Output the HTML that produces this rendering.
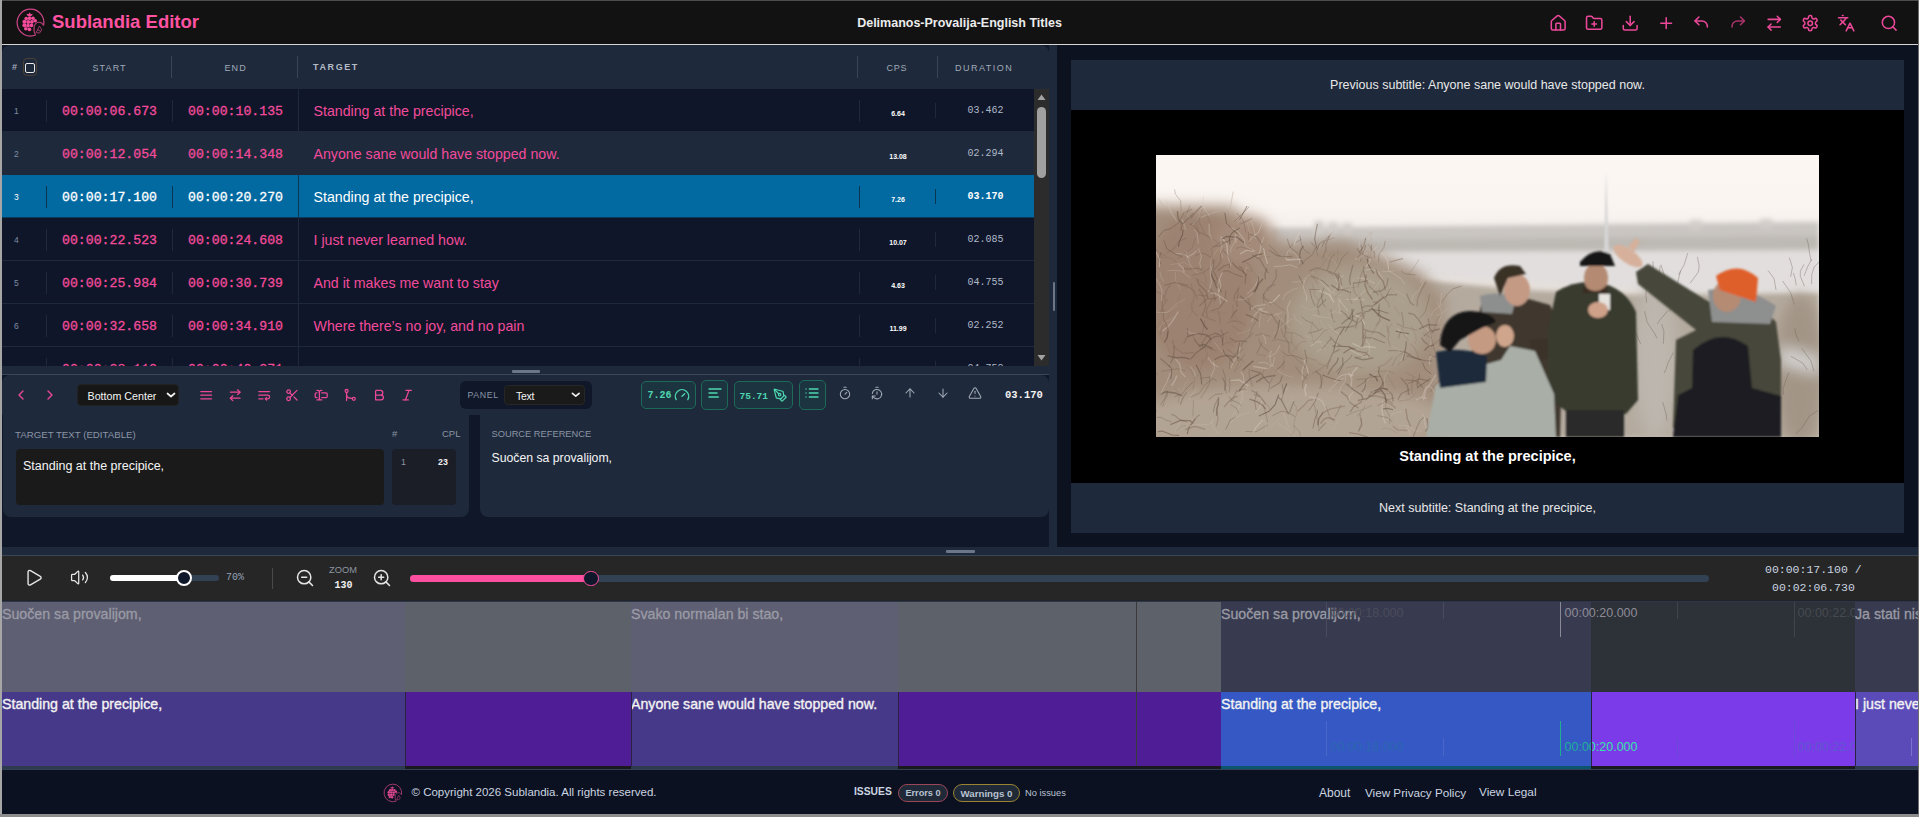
<!DOCTYPE html>
<html><head><meta charset="utf-8">
<style>
*{box-sizing:border-box;margin:0;padding:0}
html,body{width:1919px;height:817px;overflow:hidden;background:#8f8f8f;font-family:"Liberation Sans",sans-serif;}
.a{position:absolute}
.mono{font-family:"Liberation Mono",monospace}
svg.i{position:absolute;fill:none;stroke-linecap:round;stroke-linejoin:round}
.nw{white-space:nowrap}
</style></head>
<body>
<div class="a" style="left:0px;top:0px;width:1919px;height:1px;background:#4c4c4c;"></div>
<div class="a" style="left:0px;top:0px;width:2px;height:817px;background:#a6a6a6;"></div>
<div class="a" style="left:1918px;top:0px;width:1px;height:817px;background:#6e6e6e;"></div>
<div class="a" style="left:2px;top:1px;width:1916px;height:43px;background:#121212;"></div>
<div class="a" style="left:2px;top:44px;width:1916px;height:1px;background:#d6d6d6;"></div>
<svg class="a" style="left:14px;top:6px" width="34" height="34" viewBox="14 6 34 34">
 <path d="M35.6 35 A13.4 13.4 0 1 1 43.6 25.4" stroke="#cf468a" stroke-width="1.2" fill="none"/>
 <path d="M43.6 25.4 C41.5 20.8 35.5 21.2 34.2 26.6 C33.6 29.8 34.3 33 35.6 35" stroke="#b73e7a" stroke-width="1.1" fill="none"/>
 <g fill="#f44b9b">
  <path d="M29.6 12.6 l1.2 1.7 1.8-.5 -.5 1.8 -2.5.6 -2.5-.6 -.5-1.8 1.8.5z"/>
  <circle cx="29.6" cy="18.2" r="1.9"/><circle cx="33" cy="18.3" r="1.8"/><circle cx="26.2" cy="18.6" r="1.8"/>
  <circle cx="24.4" cy="21.7" r="2"/><circle cx="28.2" cy="22" r="2"/><circle cx="31.9" cy="21.8" r="1.9"/><circle cx="35.2" cy="20.7" r="1.8"/>
  <circle cx="24.4" cy="25.3" r="2"/><circle cx="28" cy="25.6" r="1.9"/><circle cx="31.5" cy="25.4" r="1.8"/>
  <circle cx="25.8" cy="28.7" r="1.8"/><circle cx="29.4" cy="29.3" r="1.9"/>
 </g>
 <path d="M36.2 32.5 l3.2-6.3 2.4 3.6 -2.3 3.3z M37.6 29.6 l3.2 1.8" stroke="#9e3a6c" stroke-width="1" fill="none"/>
</svg>
<div class="a nw" style="left:52px;top:13.28px;font-size:18.5px;line-height:18.5px;color:#ff52a2;font-weight:bold;">Sublandia Editor</div>
<div class="a nw" style="left:0px;top:17.38px;font-size:12.5px;line-height:12.5px;color:#ececec;font-weight:bold;width:1919px;text-align:center;">Delimanos-Provalija-English Titles</div>
<svg class="i" style="left:1548.8px;top:14px" width="18.4" height="18.4" viewBox="0 0 24 24" stroke="#ec4899" stroke-width="2"><path d="M15 21v-8a1 1 0 0 0-1-1h-4a1 1 0 0 0-1 1v8"/><path d="M3 10a2 2 0 0 1 .709-1.528l7-5.999a2 2 0 0 1 2.582 0l7 5.999A2 2 0 0 1 21 10v9a2 2 0 0 1-2 2H5a2 2 0 0 1-2-2z"/></svg>
<svg class="i" style="left:1584.8px;top:14px" width="18.4" height="18.4" viewBox="0 0 24 24" stroke="#ec4899" stroke-width="2"><path d="M12 10v6"/><path d="M9 13h6"/><path d="M20 20a2 2 0 0 0 2-2V8a2 2 0 0 0-2-2h-7.9a2 2 0 0 1-1.69-.9L9.6 3.9A2 2 0 0 0 7.93 3H4a2 2 0 0 0-2 2v13a2 2 0 0 0 2 2Z"/></svg>
<svg class="i" style="left:1620.8px;top:14px" width="18.4" height="18.4" viewBox="0 0 24 24" stroke="#ec4899" stroke-width="2"><path d="M21 15v4a2 2 0 0 1-2 2H5a2 2 0 0 1-2-2v-4"/><polyline points="7 10 12 15 17 10"/><line x1="12" x2="12" y1="15" y2="3"/></svg>
<svg class="i" style="left:1656.8px;top:14px" width="18.4" height="18.4" viewBox="0 0 24 24" stroke="#ec4899" stroke-width="2"><path d="M5 12h14"/><path d="M12 5v14"/></svg>
<svg class="i" style="left:1691.8px;top:14px" width="18.4" height="18.4" viewBox="0 0 24 24" stroke="#ec4899" stroke-width="2"><path d="M9 14 4 9l5-5"/><path d="M4 9h9a7 7 0 0 1 7 7v1"/></svg>
<svg class="i" style="left:1728.8px;top:14px" width="18.4" height="18.4" viewBox="0 0 24 24" stroke="#a8336c" stroke-width="2"><path d="m15 14 5-5-5-5"/><path d="M20 9h-9a7 7 0 0 0-7 7v1"/></svg>
<svg class="i" style="left:1764.8px;top:14px" width="18.4" height="18.4" viewBox="0 0 24 24" stroke="#ec4899" stroke-width="2"><path d="m16 3 4 4-4 4"/><path d="M20 7H4"/><path d="m8 21-4-4 4-4"/><path d="M4 17h16"/></svg>
<svg class="i" style="left:1800.8px;top:14px" width="18.4" height="18.4" viewBox="0 0 24 24" stroke="#ec4899" stroke-width="2"><path d="M12.22 2h-.44a2 2 0 0 0-2 2v.18a2 2 0 0 1-1 1.73l-.43.25a2 2 0 0 1-2 0l-.15-.08a2 2 0 0 0-2.73.73l-.22.38a2 2 0 0 0 .73 2.73l.15.1a2 2 0 0 1 1 1.72v.51a2 2 0 0 1-1 1.74l-.15.09a2 2 0 0 0-.73 2.73l.22.38a2 2 0 0 0 2.73.73l.15-.08a2 2 0 0 1 2 0l.43.25a2 2 0 0 1 1 1.73V20a2 2 0 0 0 2 2h.44a2 2 0 0 0 2-2v-.18a2 2 0 0 1 1-1.73l.43-.25a2 2 0 0 1 2 0l.15.08a2 2 0 0 0 2.73-.73l.22-.39a2 2 0 0 0-.73-2.73l-.15-.08a2 2 0 0 1-1-1.74v-.5a2 2 0 0 1 1-1.74l.15-.09a2 2 0 0 0 .73-2.73l-.22-.38a2 2 0 0 0-2.73-.73l-.15.08a2 2 0 0 1-2 0l-.43-.25a2 2 0 0 1-1-1.73V4a2 2 0 0 0-2-2z"/><circle cx="12" cy="12" r="3"/></svg>
<svg class="i" style="left:1836.8px;top:14px" width="18.4" height="18.4" viewBox="0 0 24 24" stroke="#ec4899" stroke-width="2"><path d="m5 8 6 6"/><path d="m4 14 6-6 2-3"/><path d="M2 5h12"/><path d="M7 2h1"/><path d="m22 22-5-10-5 10"/><path d="M14 18h6"/></svg>
<svg class="i" style="left:1880px;top:13.6px" width="18.4" height="18.4" viewBox="0 0 24 24" stroke="#ec4899" stroke-width="2"><circle cx="11" cy="11" r="8"/><path d="m21 21-4.3-4.3"/></svg>
<div class="a" style="left:2px;top:45px;width:1916px;height:510px;background:#0f1729;"></div>
<div class="a" style="left:1049px;top:45px;width:8px;height:510px;background:#1e293b;"></div>
<div class="a" style="left:1057px;top:45px;width:861px;height:502px;background:#0c1220;"></div>
<div class="a" style="left:1052.5px;top:282px;width:2px;height:29px;background:#6b7789;border-radius:1px"></div>
<div class="a" style="left:2px;top:547px;width:1916px;height:8px;background:#1e293b;"></div>
<div class="a" style="left:2px;top:555px;width:1916px;height:1px;background:#3a4556;"></div>
<div class="a" style="left:2px;top:45px;width:1047px;height:321px;background:#0f1629;overflow:hidden;border-radius:8px 8px 0 8px">
<div class="a" style="left:0px;top:0px;width:1047px;height:44px;background:#1e293b;"></div>
<div class="a nw" style="left:10px;top:18.35px;font-size:9px;line-height:9px;color:#a1aab8;font-weight:bold;">#</div>
<div class="a" style="left:21px;top:13px;width:14px;height:18px;border:1px solid #4a4036;border-radius:4px"></div>
<div class="a" style="left:23px;top:17.5px;width:10px;height:10px;border:1.5px solid #e8e8e8;border-radius:2px"></div>
<div class="a nw" style="left:90.5px;top:18.85px;font-size:9px;line-height:9px;color:#a1aab8;letter-spacing:1.1px">START</div>
<div class="a nw" style="left:222.5px;top:18.85px;font-size:9px;line-height:9px;color:#a1aab8;letter-spacing:1.1px">END</div>
<div class="a nw" style="left:311px;top:18.35px;font-size:9px;line-height:9px;color:#b4bcc8;font-weight:bold;letter-spacing:1.6px">TARGET</div>
<div class="a nw" style="left:884.5px;top:18.85px;font-size:9px;line-height:9px;color:#a1aab8;letter-spacing:0.8px">CPS</div>
<div class="a nw" style="left:953px;top:18.85px;font-size:9px;line-height:9px;color:#a1aab8;letter-spacing:1.5px">DURATION</div>
<div class="a" style="left:168.5px;top:11px;width:1px;height:22px;background:#3a4658;"></div>
<div class="a" style="left:294.5px;top:11px;width:1px;height:22px;background:#3a4658;"></div>
<div class="a" style="left:854.5px;top:11px;width:1px;height:22px;background:#3a4658;"></div>
<div class="a" style="left:935px;top:11px;width:1px;height:22px;background:#3a4658;"></div>
<div class="a" style="left:0px;top:44px;width:1032px;height:43px;background:#0f1629;border-bottom:1px solid #1e293b"></div>
<div class="a" style="left:44px;top:55px;width:1px;height:22px;background:#1e293b;"></div>
<div class="a" style="left:169.5px;top:55px;width:1px;height:22px;background:#1e293b;"></div>
<div class="a" style="left:296px;top:44px;width:1px;height:43px;background:#1e293b;"></div>
<div class="a" style="left:857px;top:55px;width:1px;height:22px;background:#1e293b;"></div>
<div class="a" style="left:933px;top:58px;width:1px;height:15px;background:#1e293b;"></div>
<div class="a nw" style="left:12px;top:61.77px;font-size:8.5px;line-height:8.5px;color:#7f8ca3;">1</div>
<div class="a nw mono" style="left:60px;top:59.97px;font-size:13.2px;line-height:13.2px;color:#f24b9b;-webkit-text-stroke:0.3px #f24b9b">00:00:06.673</div>
<div class="a nw mono" style="left:186px;top:59.97px;font-size:13.2px;line-height:13.2px;color:#f24b9b;-webkit-text-stroke:0.3px #f24b9b">00:00:10.135</div>
<div class="a nw" style="left:311.5px;top:59.43px;font-size:14.2px;line-height:14.2px;color:#f24b9b;">Standing at the precipice,</div>
<div class="a nw" style="left:858px;top:65.05px;font-size:7px;line-height:7px;color:#ffffff;font-weight:bold;width:76px;text-align:center;">6.64</div>
<div class="a nw mono" style="left:934px;top:61.4px;font-size:10px;line-height:10px;color:#aeb8c8;width:99px;text-align:center;">03.462</div>
<div class="a" style="left:0px;top:87px;width:1032px;height:43px;background:#1e293b;border-bottom:1px solid #1e293b"></div>
<div class="a" style="left:44px;top:98px;width:1px;height:22px;background:#1e293b;"></div>
<div class="a" style="left:169.5px;top:98px;width:1px;height:22px;background:#1e293b;"></div>
<div class="a" style="left:296px;top:87px;width:1px;height:43px;background:#1e293b;"></div>
<div class="a" style="left:857px;top:98px;width:1px;height:22px;background:#1e293b;"></div>
<div class="a" style="left:933px;top:101px;width:1px;height:15px;background:#1e293b;"></div>
<div class="a nw" style="left:12px;top:104.78px;font-size:8.5px;line-height:8.5px;color:#7f8ca3;">2</div>
<div class="a nw mono" style="left:60px;top:102.97px;font-size:13.2px;line-height:13.2px;color:#f24b9b;-webkit-text-stroke:0.3px #f24b9b">00:00:12.054</div>
<div class="a nw mono" style="left:186px;top:102.97px;font-size:13.2px;line-height:13.2px;color:#f24b9b;-webkit-text-stroke:0.3px #f24b9b">00:00:14.348</div>
<div class="a nw" style="left:311.5px;top:102.43px;font-size:14.2px;line-height:14.2px;color:#f24b9b;">Anyone sane would have stopped now.</div>
<div class="a nw" style="left:858px;top:108.05px;font-size:7px;line-height:7px;color:#ffffff;font-weight:bold;width:76px;text-align:center;">13.08</div>
<div class="a nw mono" style="left:934px;top:104.4px;font-size:10px;line-height:10px;color:#aeb8c8;width:99px;text-align:center;">02.294</div>
<div class="a" style="left:0px;top:130px;width:1032px;height:43px;background:#0369a1;border-bottom:1px solid #0b3b5c"></div>
<div class="a" style="left:44px;top:141px;width:1px;height:22px;background:#0b3550;"></div>
<div class="a" style="left:169.5px;top:141px;width:1px;height:22px;background:#0b3550;"></div>
<div class="a" style="left:296px;top:130px;width:1px;height:43px;background:#0b3550;"></div>
<div class="a" style="left:857px;top:141px;width:1px;height:22px;background:#0b3550;"></div>
<div class="a" style="left:933px;top:144px;width:1px;height:15px;background:#0b3550;"></div>
<div class="a nw" style="left:12px;top:147.78px;font-size:8.5px;line-height:8.5px;color:#ffffff;">3</div>
<div class="a nw mono" style="left:60px;top:145.97px;font-size:13.2px;line-height:13.2px;color:#ffffff;-webkit-text-stroke:0.3px #ffffff">00:00:17.100</div>
<div class="a nw mono" style="left:186px;top:145.97px;font-size:13.2px;line-height:13.2px;color:#ffffff;-webkit-text-stroke:0.3px #ffffff">00:00:20.270</div>
<div class="a nw" style="left:311.5px;top:145.43px;font-size:14.2px;line-height:14.2px;color:#ffffff;">Standing at the precipice,</div>
<div class="a nw" style="left:858px;top:151.05px;font-size:7px;line-height:7px;color:#ffffff;font-weight:bold;width:76px;text-align:center;">7.26</div>
<div class="a nw mono" style="left:934px;top:147.4px;font-size:10px;line-height:10px;color:#ffffff;font-weight:bold;width:99px;text-align:center;">03.170</div>
<div class="a" style="left:0px;top:173px;width:1032px;height:43px;background:#0f1629;border-bottom:1px solid #1e293b"></div>
<div class="a" style="left:44px;top:184px;width:1px;height:22px;background:#1e293b;"></div>
<div class="a" style="left:169.5px;top:184px;width:1px;height:22px;background:#1e293b;"></div>
<div class="a" style="left:296px;top:173px;width:1px;height:43px;background:#1e293b;"></div>
<div class="a" style="left:857px;top:184px;width:1px;height:22px;background:#1e293b;"></div>
<div class="a" style="left:933px;top:187px;width:1px;height:15px;background:#1e293b;"></div>
<div class="a nw" style="left:12px;top:190.78px;font-size:8.5px;line-height:8.5px;color:#7f8ca3;">4</div>
<div class="a nw mono" style="left:60px;top:188.97px;font-size:13.2px;line-height:13.2px;color:#f24b9b;-webkit-text-stroke:0.3px #f24b9b">00:00:22.523</div>
<div class="a nw mono" style="left:186px;top:188.97px;font-size:13.2px;line-height:13.2px;color:#f24b9b;-webkit-text-stroke:0.3px #f24b9b">00:00:24.608</div>
<div class="a nw" style="left:311.5px;top:188.43px;font-size:14.2px;line-height:14.2px;color:#f24b9b;">I just never learned how.</div>
<div class="a nw" style="left:858px;top:194.05px;font-size:7px;line-height:7px;color:#ffffff;font-weight:bold;width:76px;text-align:center;">10.07</div>
<div class="a nw mono" style="left:934px;top:190.4px;font-size:10px;line-height:10px;color:#aeb8c8;width:99px;text-align:center;">02.085</div>
<div class="a" style="left:0px;top:216px;width:1032px;height:43px;background:#0f1629;border-bottom:1px solid #1e293b"></div>
<div class="a" style="left:44px;top:227px;width:1px;height:22px;background:#1e293b;"></div>
<div class="a" style="left:169.5px;top:227px;width:1px;height:22px;background:#1e293b;"></div>
<div class="a" style="left:296px;top:216px;width:1px;height:43px;background:#1e293b;"></div>
<div class="a" style="left:857px;top:227px;width:1px;height:22px;background:#1e293b;"></div>
<div class="a" style="left:933px;top:230px;width:1px;height:15px;background:#1e293b;"></div>
<div class="a nw" style="left:12px;top:233.78px;font-size:8.5px;line-height:8.5px;color:#7f8ca3;">5</div>
<div class="a nw mono" style="left:60px;top:231.97px;font-size:13.2px;line-height:13.2px;color:#f24b9b;-webkit-text-stroke:0.3px #f24b9b">00:00:25.984</div>
<div class="a nw mono" style="left:186px;top:231.97px;font-size:13.2px;line-height:13.2px;color:#f24b9b;-webkit-text-stroke:0.3px #f24b9b">00:00:30.739</div>
<div class="a nw" style="left:311.5px;top:231.43px;font-size:14.2px;line-height:14.2px;color:#f24b9b;">And it makes me want to stay</div>
<div class="a nw" style="left:858px;top:237.05px;font-size:7px;line-height:7px;color:#ffffff;font-weight:bold;width:76px;text-align:center;">4.63</div>
<div class="a nw mono" style="left:934px;top:233.4px;font-size:10px;line-height:10px;color:#aeb8c8;width:99px;text-align:center;">04.755</div>
<div class="a" style="left:0px;top:259px;width:1032px;height:43px;background:#0f1629;border-bottom:1px solid #1e293b"></div>
<div class="a" style="left:44px;top:270px;width:1px;height:22px;background:#1e293b;"></div>
<div class="a" style="left:169.5px;top:270px;width:1px;height:22px;background:#1e293b;"></div>
<div class="a" style="left:296px;top:259px;width:1px;height:43px;background:#1e293b;"></div>
<div class="a" style="left:857px;top:270px;width:1px;height:22px;background:#1e293b;"></div>
<div class="a" style="left:933px;top:273px;width:1px;height:15px;background:#1e293b;"></div>
<div class="a nw" style="left:12px;top:276.77px;font-size:8.5px;line-height:8.5px;color:#7f8ca3;">6</div>
<div class="a nw mono" style="left:60px;top:274.97px;font-size:13.2px;line-height:13.2px;color:#f24b9b;-webkit-text-stroke:0.3px #f24b9b">00:00:32.658</div>
<div class="a nw mono" style="left:186px;top:274.97px;font-size:13.2px;line-height:13.2px;color:#f24b9b;-webkit-text-stroke:0.3px #f24b9b">00:00:34.910</div>
<div class="a nw" style="left:311.5px;top:274.43px;font-size:14.2px;line-height:14.2px;color:#f24b9b;">Where there&#8217;s no joy, and no pain</div>
<div class="a nw" style="left:858px;top:280.05px;font-size:7px;line-height:7px;color:#ffffff;font-weight:bold;width:76px;text-align:center;">11.99</div>
<div class="a nw mono" style="left:934px;top:276.4px;font-size:10px;line-height:10px;color:#aeb8c8;width:99px;text-align:center;">02.252</div>
<div class="a" style="left:0px;top:302px;width:1032px;height:43px;background:#0f1629;border-bottom:1px solid #1e293b"></div>
<div class="a" style="left:44px;top:313px;width:1px;height:22px;background:#1e293b;"></div>
<div class="a" style="left:169.5px;top:313px;width:1px;height:22px;background:#1e293b;"></div>
<div class="a" style="left:296px;top:302px;width:1px;height:43px;background:#1e293b;"></div>
<div class="a" style="left:857px;top:313px;width:1px;height:22px;background:#1e293b;"></div>
<div class="a" style="left:933px;top:316px;width:1px;height:15px;background:#1e293b;"></div>
<div class="a nw" style="left:12px;top:319.77px;font-size:8.5px;line-height:8.5px;color:#7f8ca3;">7</div>
<div class="a nw mono" style="left:60px;top:317.97px;font-size:13.2px;line-height:13.2px;color:#f24b9b;-webkit-text-stroke:0.3px #f24b9b">00:00:38.113</div>
<div class="a nw mono" style="left:186px;top:317.97px;font-size:13.2px;line-height:13.2px;color:#f24b9b;-webkit-text-stroke:0.3px #f24b9b">00:00:40.371</div>
<div class="a nw" style="left:311.5px;top:317.43px;font-size:14.2px;line-height:14.2px;color:#f24b9b;"></div>
<div class="a nw" style="left:858px;top:323.05px;font-size:7px;line-height:7px;color:#ffffff;font-weight:bold;width:76px;text-align:center;"></div>
<div class="a nw mono" style="left:934px;top:319.4px;font-size:10px;line-height:10px;color:#aeb8c8;width:99px;text-align:center;">04.758</div>
<div class="a" style="left:1032px;top:44px;width:15px;height:277px;background:#2c2c2c;"></div>
<div class="a" style="left:1035px;top:62px;width:9px;height:71px;background:#a0a0a0;border-radius:5px"></div>
<svg class="a" style="left:1034px;top:48px" width="11" height="8"><path d="M1.5 7 L5.5 1.5 L9.5 7z" fill="#a3a3a3"/></svg>
<svg class="a" style="left:1034px;top:309px" width="11" height="8"><path d="M1.5 1 L5.5 6.5 L9.5 1z" fill="#a3a3a3"/></svg>
</div>
<div class="a" style="left:2px;top:366px;width:1047px;height:8px;background:#1e293b;"></div>
<div class="a" style="left:512px;top:370px;width:28px;height:2.5px;background:#6b7789;border-radius:1px"></div>
<div class="a" style="left:2px;top:374px;width:1047px;height:1px;background:#3b4658;"></div>
<div class="a" style="left:2px;top:375px;width:1047px;height:40px;background:#1e293b;border-radius:8px 8px 0 0"></div>
<svg class="i" style="left:13.0px;top:387.0px" width="16" height="16" viewBox="0 0 24 24" stroke="#ec4899" stroke-width="2"><path d="m15 18-6-6 6-6"/></svg>
<svg class="i" style="left:42.0px;top:387.0px" width="16" height="16" viewBox="0 0 24 24" stroke="#ec4899" stroke-width="2"><path d="m9 18 6-6-6-6"/></svg>
<div class="a" style="left:77px;top:384px;width:102px;height:22px;background:#171717;border-radius:4px;border:1px solid #222"></div>
<div class="a nw" style="left:87.5px;top:390.9px;font-size:10.7px;line-height:10.7px;color:#f4f4f4;">Bottom Center</div>
<svg class="i" style="left:164.5px;top:388.5px" width="12" height="12" viewBox="0 0 24 24" stroke="#f2f2f2" stroke-width="3.4"><path d="m5 9 7 6 7-6"/></svg>
<svg class="i" style="left:198.8px;top:388.0px" width="14.4" height="14.4" viewBox="0 0 24 24" stroke="#ec4899" stroke-width="2.1"><path d="M3 12h18"/><path d="M3 18h18"/><path d="M3 6h18"/></svg>
<svg class="i" style="left:227.8px;top:388.0px" width="14.4" height="14.4" viewBox="0 0 24 24" stroke="#ec4899" stroke-width="2.1"><path d="m16 3 4 4-4 4"/><path d="M20 7H4"/><path d="m8 21-4-4 4-4"/><path d="M4 17h16"/></svg>
<svg class="i" style="left:256.8px;top:388.0px" width="14.4" height="14.4" viewBox="0 0 24 24" stroke="#ec4899" stroke-width="2.1"><line x1="3" x2="21" y1="6" y2="6"/><path d="M3 12h15a3 3 0 1 1 0 6h-4"/><polyline points="16 16 14 18 16 20"/><line x1="3" x2="10" y1="18" y2="18"/></svg>
<svg class="i" style="left:284.8px;top:388.0px" width="14.4" height="14.4" viewBox="0 0 24 24" stroke="#ec4899" stroke-width="2.1"><circle cx="6" cy="6" r="3"/><path d="M8.12 8.12 12 12"/><path d="M20 4 8.12 15.88"/><circle cx="6" cy="18" r="3"/><path d="M14.8 14.8 20 20"/></svg>
<svg class="i" style="left:313.8px;top:388.0px" width="14.4" height="14.4" viewBox="0 0 24 24" stroke="#ec4899" stroke-width="2.1"><path d="M5 4h1a3 3 0 0 1 3 3 3 3 0 0 1 3-3h1"/><path d="M13 20h-1a3 3 0 0 1-3-3 3 3 0 0 1-3 3H5"/><path d="M5 16H4a2 2 0 0 1-2-2v-4a2 2 0 0 1 2-2h1"/><path d="M13 8h7a2 2 0 0 1 2 2v4a2 2 0 0 1-2 2h-7"/><path d="M9 7v10"/></svg>
<svg class="i" style="left:342.8px;top:388.0px" width="14.4" height="14.4" viewBox="0 0 24 24" stroke="#ec4899" stroke-width="2.1"><circle cx="6" cy="5" r="2.5"/><path d="M6 7.5V21"/><path d="M6 12c0 3 4 5 9.5 5.5"/><circle cx="18" cy="18" r="2.5"/></svg>
<svg class="i" style="left:371.8px;top:388.0px" width="14.4" height="14.4" viewBox="0 0 24 24" stroke="#ec4899" stroke-width="2.1"><path d="M6 12h9a4 4 0 0 1 0 8H7a1 1 0 0 1-1-1V5a1 1 0 0 1 1-1h7a4 4 0 0 1 0 8"/></svg>
<svg class="i" style="left:399.8px;top:388.0px" width="14.4" height="14.4" viewBox="0 0 24 24" stroke="#ec4899" stroke-width="2.1"><line x1="19" x2="10" y1="4" y2="4"/><line x1="14" x2="5" y1="20" y2="20"/><line x1="15" x2="9" y1="4" y2="20"/></svg>
<div class="a" style="left:460px;top:381px;width:132px;height:28px;background:#0f1729;border-radius:6px"></div>
<div class="a nw" style="left:467.5px;top:390.52px;font-size:8.8px;line-height:8.8px;color:#8b95a5;letter-spacing:0.6px">PANEL</div>
<div class="a" style="left:504px;top:385px;width:81px;height:20px;background:#1a1a1a;border-radius:4px;border:1px solid #262626"></div>
<div class="a nw" style="left:516px;top:391.07px;font-size:10.5px;line-height:10.5px;color:#f4f4f4;letter-spacing:-0.3px">Text</div>
<svg class="i" style="left:570px;top:389px" width="11.5" height="11.5" viewBox="0 0 24 24" stroke="#f2f2f2" stroke-width="3.4"><path d="m5 9 7 6 7-6"/></svg>
<div class="a" style="left:641px;top:381px;width:55px;height:28px;background:#1b3440;border:1px solid #1d6a58;border-radius:5px"></div>
<div class="a" style="left:701px;top:380px;width:27px;height:30px;background:#1b3440;border:1px solid #1d6a58;border-radius:5px"></div>
<div class="a" style="left:734px;top:381px;width:59px;height:28px;background:#1b3440;border:1px solid #1d6a58;border-radius:5px"></div>
<div class="a" style="left:799px;top:380px;width:27px;height:30px;background:#1b3440;border:1px solid #1d6a58;border-radius:5px"></div>
<div class="a nw mono" style="left:647.5px;top:391.4px;font-size:10px;line-height:10px;color:#4fd6b0;font-weight:bold;">7.26</div>
<svg class="i" style="left:674.0px;top:387.0px" width="16" height="16" viewBox="0 0 24 24" stroke="#4fd6b0" stroke-width="2"><path d="m12 14 4-4"/><path d="M3.34 19a10 10 0 1 1 17.32 0"/></svg>
<svg class="i" style="left:707.0px;top:385.0px" width="16" height="16" viewBox="0 0 24 24" stroke="#4fd6b0" stroke-width="2.1"><path d="M15 12H3"/><path d="M17 18H3"/><path d="M21 6H3"/></svg>
<div class="a nw mono" style="left:739.5px;top:391.78px;font-size:9.5px;line-height:9.5px;color:#4fd6b0;font-weight:bold;">75.71</div>
<svg class="i" style="left:772.75px;top:387.75px" width="14.5" height="14.5" viewBox="0 0 24 24" stroke="#4fd6b0" stroke-width="2"><path d="M15.707 21.293a1 1 0 0 1-1.414 0l-1.586-1.586a1 1 0 0 1 0-1.414l5.586-5.586a1 1 0 0 1 1.414 0l1.586 1.586a1 1 0 0 1 0 1.414z"/><path d="m18 13-1.375-6.874a1 1 0 0 0-.746-.776L3.235 2.028a1 1 0 0 0-1.207 1.207L5.35 15.879a1 1 0 0 0 .776.746L13 18"/><path d="m2.3 2.3 7.286 7.286"/><circle cx="11" cy="11" r="2"/></svg>
<svg class="i" style="left:804.0px;top:385.0px" width="16" height="16" viewBox="0 0 24 24" stroke="#4fd6b0" stroke-width="2.1"><path d="M3 12h.01"/><path d="M3 18h.01"/><path d="M3 6h.01"/><path d="M8 12h13"/><path d="M8 18h13"/><path d="M8 6h13"/></svg>
<svg class="i" style="left:838.0px;top:386.0px" width="14" height="14" viewBox="0 0 24 24" stroke="#a3abb7" stroke-width="1.8"><line x1="10" x2="14" y1="2" y2="2"/><line x1="12" x2="15" y1="14" y2="11"/><circle cx="12" cy="14" r="8"/></svg>
<svg class="i" style="left:870.0px;top:386.0px" width="14" height="14" viewBox="0 0 24 24" stroke="#a3abb7" stroke-width="1.8"><path d="M10 2h4"/><path d="M12 14v-4"/><path d="M4 13a8 8 0 0 1 8-7 8 8 0 1 1-5.3 14L4 17.6"/><path d="M9 17H4v5"/></svg>
<svg class="i" style="left:903.0px;top:386.0px" width="14" height="14" viewBox="0 0 24 24" stroke="#a3abb7" stroke-width="1.8"><path d="m5 12 7-7 7 7"/><path d="M12 19V5"/></svg>
<svg class="i" style="left:936.0px;top:386.0px" width="14" height="14" viewBox="0 0 24 24" stroke="#a3abb7" stroke-width="1.8"><path d="M12 5v14"/><path d="m19 12-7 7-7-7"/></svg>
<svg class="i" style="left:968.0px;top:386.0px" width="14" height="14" viewBox="0 0 24 24" stroke="#a3abb7" stroke-width="1.8"><path d="m21.73 18-8-14a2 2 0 0 0-3.48 0l-8 14A2 2 0 0 0 4 21h16a2 2 0 0 0 1.73-3"/><path d="M12 9v4"/><path d="M12 17h.01"/></svg>
<div class="a nw mono" style="left:1005px;top:390.02px;font-size:10.5px;line-height:10.5px;color:#f2f2f2;font-weight:bold;">03.170</div>
<div class="a" style="left:3px;top:415px;width:466px;height:102px;background:#1e293b;border-radius:0 0 8px 8px"></div>
<div class="a nw" style="left:15px;top:429.75px;font-size:9.7px;line-height:9.7px;color:#8b95a5;">TARGET TEXT (EDITABLE)</div>
<div class="a nw" style="left:392px;top:428.93px;font-size:9.5px;line-height:9.5px;color:#8b95a5;">#</div>
<div class="a nw" style="left:442px;top:428.93px;font-size:9.5px;line-height:9.5px;color:#8b95a5;">CPL</div>
<div class="a" style="left:16px;top:449px;width:368px;height:56px;background:#1a1a1a;border-radius:4px"></div>
<div class="a nw" style="left:23px;top:460.38px;font-size:12.5px;line-height:12.5px;color:#f5f5f5;">Standing at the precipice,</div>
<div class="a" style="left:392px;top:449px;width:64px;height:56px;background:#1c1e27;border-radius:4px"></div>
<div class="a nw" style="left:401px;top:457.52px;font-size:8.8px;line-height:8.8px;color:#8b95a5;">1</div>
<div class="a nw" style="left:438px;top:457.52px;font-size:8.8px;line-height:8.8px;color:#f0f0f0;font-weight:bold;">23</div>
<div class="a" style="left:480px;top:415px;width:569px;height:102px;background:#1e293b;border-radius:0 0 8px 8px"></div>
<div class="a nw" style="left:491.5px;top:430.1px;font-size:9.3px;line-height:9.3px;color:#8b95a5;">SOURCE REFERENCE</div>
<div class="a nw" style="left:491.5px;top:451.59px;font-size:12.25px;line-height:12.25px;color:#f5f5f5;">Suo&#269;en sa provalijom,</div>
<div class="a" style="left:946px;top:550px;width:29px;height:2.5px;background:#6b7789;border-radius:1px"></div>
<div class="a" style="left:1071px;top:60px;width:833px;height:50px;background:#1e293b;"></div>
<div class="a nw" style="left:1071px;top:79.38px;font-size:12.5px;line-height:12.5px;color:#e8e8e8;width:833px;text-align:center;">Previous subtitle: Anyone sane would have stopped now.</div>
<div class="a" style="left:1071px;top:110px;width:833px;height:373px;background:#000;"></div>
<div class="a" style="left:1071px;top:483px;width:833px;height:50px;background:#1e293b;"></div>
<div class="a nw" style="left:1071px;top:502.38px;font-size:12.5px;line-height:12.5px;color:#e8e8e8;width:833px;text-align:center;">Next subtitle: Standing at the precipice,</div>
<div class="a nw" style="left:1071px;top:448.68px;font-size:14.5px;line-height:14.5px;color:#ffffff;font-weight:bold;width:833px;text-align:center;">Standing at the precipice,</div>
<svg class="a" style="left:1156px;top:155px" width="663" height="282" viewBox="1156 155 663 282">
<defs>
 <linearGradient id="sky" x1="0" y1="0" x2="0" y2="1">
  <stop offset="0" stop-color="#fcf7f3"/><stop offset="0.2" stop-color="#f9f4f0"/><stop offset="0.3" stop-color="#efeae6"/><stop offset="1" stop-color="#c8beb4"/>
 </linearGradient>
 <filter id="b1" x="-30%" y="-30%" width="160%" height="160%"><feGaussianBlur stdDeviation="1"/></filter>
 <filter id="b2" x="-30%" y="-30%" width="160%" height="160%"><feGaussianBlur stdDeviation="2.5"/></filter>
 <filter id="b4" x="-30%" y="-30%" width="160%" height="160%"><feGaussianBlur stdDeviation="4"/></filter>
 <filter id="b8" x="-30%" y="-30%" width="160%" height="160%"><feGaussianBlur stdDeviation="7"/></filter>
 <filter id="b05" x="-10%" y="-10%" width="120%" height="120%"><feGaussianBlur stdDeviation="0.6"/></filter>
 <clipPath id="vc"><rect x="1156" y="155" width="663" height="282"/></clipPath>
</defs>
<g clip-path="url(#vc)">
<rect x="1156" y="155" width="663" height="282" fill="url(#sky)"/>
<g filter="url(#b2)">
 <path d="M1270 228 L1819 222 L1819 256 L1380 258 L1270 256z" fill="#c9c5c1"/>
 <path d="M1300 240 L1819 236 L1819 254 L1300 258z" fill="#bdb9b4"/>
 <path d="M1314 236 v-15 h10 v15z M1328 236 v-14 h10 v14z M1342 236 v-13 h10 v13z M1690 230 v-10 h12 v10z M1760 228 v-9 h12 v9z" fill="#d2cdc9"/>
 <path d="M1368 252 L1819 250 L1819 291 L1700 293 L1560 284 L1420 276 L1380 268z" fill="#e1dedd"/>
 <path d="M1156 262 L1368 262 L1420 280 L1520 290 L1640 295 L1819 293 L1819 437 L1156 437z" fill="#b4aa9e"/>
</g>
<g filter="url(#b8)">
 <path d="M1140 205 L1232 206 L1256 229 L1277 241 L1307 244 L1343 240 L1374 252 L1420 272 L1445 300 L1440 450 L1140 450z" fill="#a28d7c"/>
 <ellipse cx="1200" cy="290" rx="55" ry="80" fill="#9c8270"/>
 <ellipse cx="1245" cy="240" rx="30" ry="25" fill="#a48b79"/>
 <ellipse cx="1360" cy="320" rx="70" ry="55" fill="#aa9e8c"/>
 <ellipse cx="1290" cy="420" rx="160" ry="35" fill="#b2a494"/>
 <ellipse cx="1655" cy="360" rx="22" ry="80" fill="#bcb6ae"/>
 <ellipse cx="1800" cy="370" rx="25" ry="75" fill="#a39586"/>
 <path d="M1780 346 L1819 356 L1819 375 L1780 365z" fill="#d2d0ce"/>
</g>
<!--TWIGS--><g filter="url(#b05)" fill="none"><path d="M1286.7 332.7 L1293.9 332.7 L1298.7 335.0 L1304.8 339.1" stroke="#7a6555" stroke-width="0.8" opacity="0.39"/><path d="M1182.2 391.9 L1185.1 384.2 L1189.7 378.7" stroke="#c0b2a4" stroke-width="0.8" opacity="0.30"/><path d="M1211.0 257.3 L1205.6 254.1 L1200.3 253.2 L1195.1 256.2" stroke="#6e5a4c" stroke-width="1.0" opacity="0.38"/><path d="M1444.3 436.0 L1447.3 430.5 L1446.6 424.5 L1444.3 415.4" stroke="#5e4c40" stroke-width="1.0" opacity="0.59"/><path d="M1216.6 415.7 L1216.9 408.8 L1218.4 403.6 L1218.5 397.3" stroke="#6e5a4c" stroke-width="1.4" opacity="0.53"/><path d="M1190.1 258.4 L1184.0 254.4 L1175.3 253.2" stroke="#d2c6bb" stroke-width="0.8" opacity="0.52"/><path d="M1193.8 352.6 L1182.9 353.3 L1174.6 347.6 L1172.4 339.8" stroke="#6e5a4c" stroke-width="0.8" opacity="0.42"/><path d="M1402.9 352.1 L1397.6 350.7 L1388.2 350.6" stroke="#5e4c40" stroke-width="1.0" opacity="0.32"/><path d="M1216.3 350.9 L1210.0 348.8 L1199.8 345.7 L1194.2 340.0" stroke="#7a6555" stroke-width="1.1" opacity="0.39"/><path d="M1222.0 344.7 L1230.6 341.4 L1235.8 342.7" stroke="#8a7564" stroke-width="1.1" opacity="0.43"/><path d="M1359.6 260.9 L1361.8 255.3 L1359.8 246.5 L1359.0 240.9" stroke="#d2c6bb" stroke-width="1.1" opacity="0.38"/><path d="M1160.8 263.8 L1159.0 259.8 L1160.9 252.4" stroke="#6e5a4c" stroke-width="1.0" opacity="0.57"/><path d="M1439.4 355.7 L1446.6 351.9 L1452.3 347.4" stroke="#5e4c40" stroke-width="1.4" opacity="0.31"/><path d="M1339.9 314.3 L1339.8 309.3 L1338.5 302.3 L1340.3 298.4" stroke="#c0b2a4" stroke-width="1.2" opacity="0.54"/><path d="M1420.4 283.4 L1424.1 274.0 L1431.4 267.9" stroke="#d2c6bb" stroke-width="0.7" opacity="0.50"/><path d="M1176.9 221.5 L1171.0 213.2 L1169.0 206.8 L1166.1 199.3" stroke="#d2c6bb" stroke-width="0.8" opacity="0.53"/><path d="M1164.6 342.5 L1158.8 333.5 L1155.6 324.6" stroke="#8a7564" stroke-width="0.9" opacity="0.30"/><path d="M1243.0 360.7 L1235.5 355.3 L1227.0 349.1" stroke="#7a6555" stroke-width="0.9" opacity="0.50"/><path d="M1213.4 302.1 L1219.3 293.9 L1222.2 286.3" stroke="#7a6555" stroke-width="0.8" opacity="0.41"/><path d="M1174.5 432.3 L1178.0 426.1 L1180.1 421.0" stroke="#c0b2a4" stroke-width="1.1" opacity="0.50"/><path d="M1363.0 399.5 L1361.6 395.2 L1353.3 389.5 L1346.4 383.7" stroke="#5e4c40" stroke-width="1.2" opacity="0.47"/><path d="M1341.2 296.0 L1335.9 294.3 L1332.0 292.2 L1326.5 287.8" stroke="#c0b2a4" stroke-width="1.1" opacity="0.41"/><path d="M1178.5 246.9 L1179.3 241.7 L1182.4 235.1 L1183.1 229.9" stroke="#5e4c40" stroke-width="1.1" opacity="0.58"/><path d="M1300.6 436.2 L1299.6 431.8 L1293.5 425.1" stroke="#8a7564" stroke-width="0.8" opacity="0.57"/><path d="M1157.9 330.4 L1162.1 324.4 L1166.5 321.2 L1175.2 317.0" stroke="#c0b2a4" stroke-width="0.8" opacity="0.37"/><path d="M1245.5 431.5 L1255.9 431.8 L1261.4 428.4 L1267.7 425.1" stroke="#5e4c40" stroke-width="1.0" opacity="0.31"/><path d="M1252.8 386.7 L1249.4 376.3 L1248.9 368.7" stroke="#8a7564" stroke-width="1.4" opacity="0.45"/><path d="M1220.0 324.8 L1219.8 317.2 L1217.6 309.6" stroke="#8a7564" stroke-width="1.4" opacity="0.56"/><path d="M1332.1 272.2 L1324.4 270.0 L1317.0 267.8 L1309.3 270.9" stroke="#6e5a4c" stroke-width="1.1" opacity="0.42"/><path d="M1387.5 333.4 L1387.7 328.9 L1392.1 323.6" stroke="#8a7564" stroke-width="0.9" opacity="0.44"/><path d="M1192.7 302.8 L1194.7 295.4 L1192.0 289.0 L1191.3 283.2" stroke="#6e5a4c" stroke-width="0.7" opacity="0.35"/><path d="M1159.4 267.3 L1159.6 259.0 L1155.3 251.0" stroke="#d2c6bb" stroke-width="1.1" opacity="0.52"/><path d="M1358.7 408.3 L1350.4 403.1 L1346.7 396.2 L1340.7 391.4" stroke="#7a6555" stroke-width="1.3" opacity="0.48"/><path d="M1370.1 392.1 L1378.3 392.1 L1383.3 394.2 L1388.5 393.3" stroke="#7a6555" stroke-width="0.8" opacity="0.33"/><path d="M1268.1 303.0 L1273.3 301.6 L1279.8 294.5" stroke="#d2c6bb" stroke-width="1.2" opacity="0.57"/><path d="M1302.1 379.7 L1302.2 370.1 L1303.7 366.2" stroke="#d2c6bb" stroke-width="1.1" opacity="0.47"/><path d="M1198.4 243.7 L1197.0 232.9 L1193.9 229.4" stroke="#c0b2a4" stroke-width="1.0" opacity="0.53"/><path d="M1250.5 310.7 L1249.8 305.2 L1244.0 299.1 L1239.8 295.7" stroke="#5e4c40" stroke-width="1.2" opacity="0.42"/><path d="M1212.4 239.1 L1209.2 233.7 L1209.2 223.8" stroke="#c0b2a4" stroke-width="1.4" opacity="0.47"/><path d="M1211.2 338.6 L1206.5 334.9 L1197.4 333.3 L1187.5 336.7" stroke="#5e4c40" stroke-width="1.3" opacity="0.51"/><path d="M1377.7 381.4 L1375.8 377.3 L1369.3 374.1" stroke="#5e4c40" stroke-width="1.4" opacity="0.57"/><path d="M1170.3 264.7 L1176.6 263.6 L1184.5 262.6 L1190.2 266.2" stroke="#c0b2a4" stroke-width="0.8" opacity="0.34"/><path d="M1270.3 336.3 L1261.5 333.7 L1255.1 335.9" stroke="#7a6555" stroke-width="1.2" opacity="0.30"/><path d="M1230.7 265.3 L1227.7 255.0 L1226.8 244.1 L1220.7 236.6" stroke="#d2c6bb" stroke-width="1.2" opacity="0.59"/><path d="M1267.7 422.4 L1265.6 412.7 L1263.2 404.9" stroke="#8a7564" stroke-width="1.0" opacity="0.46"/><path d="M1328.8 286.6 L1323.0 281.2 L1314.9 277.2 L1310.9 276.7" stroke="#6e5a4c" stroke-width="1.1" opacity="0.42"/><path d="M1247.1 294.3 L1250.3 291.1 L1255.1 286.0 L1259.4 276.1" stroke="#d2c6bb" stroke-width="0.8" opacity="0.54"/><path d="M1404.9 284.5 L1400.8 278.7 L1395.0 274.5 L1388.0 270.5" stroke="#c0b2a4" stroke-width="1.1" opacity="0.60"/><path d="M1431.3 374.0 L1425.4 369.4 L1422.4 362.4" stroke="#5e4c40" stroke-width="0.9" opacity="0.51"/><path d="M1319.3 340.2 L1319.3 334.9 L1325.3 325.8" stroke="#c0b2a4" stroke-width="0.7" opacity="0.32"/><path d="M1234.3 300.8 L1234.4 295.2 L1239.6 287.5" stroke="#7a6555" stroke-width="1.1" opacity="0.49"/><path d="M1263.9 313.4 L1256.9 310.8 L1249.7 303.7 L1247.3 297.0" stroke="#7a6555" stroke-width="1.0" opacity="0.52"/><path d="M1200.4 398.2 L1204.8 391.8 L1209.9 382.6 L1209.5 376.1" stroke="#5e4c40" stroke-width="0.8" opacity="0.32"/><path d="M1319.1 314.9 L1317.1 305.3 L1319.3 299.6 L1324.3 293.0" stroke="#8a7564" stroke-width="1.2" opacity="0.51"/><path d="M1237.8 233.9 L1232.7 229.6 L1226.5 223.2 L1224.8 212.9" stroke="#5e4c40" stroke-width="1.0" opacity="0.54"/><path d="M1244.1 275.3 L1245.1 270.8 L1247.0 267.1" stroke="#d2c6bb" stroke-width="1.0" opacity="0.36"/><path d="M1318.9 388.9 L1321.4 384.3 L1323.2 374.3" stroke="#6e5a4c" stroke-width="0.9" opacity="0.32"/><path d="M1201.9 270.1 L1197.9 268.1 L1188.4 269.3 L1184.0 268.3" stroke="#5e4c40" stroke-width="0.8" opacity="0.49"/><path d="M1197.6 376.8 L1200.9 368.4 L1202.5 358.2" stroke="#8a7564" stroke-width="1.0" opacity="0.40"/><path d="M1435.8 359.4 L1440.8 351.9 L1446.7 348.4" stroke="#c0b2a4" stroke-width="0.9" opacity="0.30"/><path d="M1290.3 328.3 L1284.2 321.7 L1279.0 317.2 L1276.5 312.8" stroke="#c0b2a4" stroke-width="1.0" opacity="0.35"/><path d="M1215.1 300.7 L1213.8 293.5 L1210.0 288.7" stroke="#7a6555" stroke-width="1.3" opacity="0.53"/><path d="M1161.0 314.0 L1162.5 309.5 L1162.3 304.0 L1163.1 295.0" stroke="#7a6555" stroke-width="1.0" opacity="0.57"/><path d="M1272.3 415.8 L1281.2 411.2 L1287.9 412.3 L1295.3 416.8" stroke="#6e5a4c" stroke-width="1.0" opacity="0.37"/><path d="M1170.4 424.6 L1180.4 420.5 L1189.8 420.7 L1193.4 423.2" stroke="#6e5a4c" stroke-width="1.3" opacity="0.57"/><path d="M1286.1 258.4 L1287.5 251.7 L1291.0 248.1" stroke="#d2c6bb" stroke-width="0.8" opacity="0.52"/><path d="M1335.0 322.3 L1332.6 319.1 L1330.7 309.3" stroke="#6e5a4c" stroke-width="0.9" opacity="0.48"/><path d="M1308.6 410.8 L1314.8 402.2 L1318.3 392.8" stroke="#7a6555" stroke-width="1.0" opacity="0.58"/><path d="M1182.3 395.8 L1175.2 393.0 L1165.4 391.8 L1159.9 394.6" stroke="#5e4c40" stroke-width="1.4" opacity="0.50"/><path d="M1175.4 217.6 L1170.9 210.1 L1162.7 205.5 L1158.9 199.4" stroke="#c0b2a4" stroke-width="1.2" opacity="0.37"/><path d="M1319.0 308.6 L1308.8 309.8 L1301.4 305.8" stroke="#c0b2a4" stroke-width="0.9" opacity="0.40"/><path d="M1269.3 358.0 L1263.3 355.2 L1257.2 354.5" stroke="#8a7564" stroke-width="1.2" opacity="0.40"/><path d="M1196.7 222.4 L1198.4 217.4 L1202.8 208.6" stroke="#6e5a4c" stroke-width="0.8" opacity="0.31"/><path d="M1441.4 302.8 L1447.2 294.2 L1452.7 288.9 L1461.6 286.0" stroke="#8a7564" stroke-width="1.0" opacity="0.58"/><path d="M1336.1 372.3 L1343.1 364.0 L1349.7 358.4 L1352.1 355.1" stroke="#5e4c40" stroke-width="0.9" opacity="0.43"/><path d="M1317.0 248.6 L1314.7 239.1 L1315.4 234.0 L1317.4 223.9" stroke="#5e4c40" stroke-width="1.1" opacity="0.45"/><path d="M1321.9 247.0 L1325.3 239.8 L1331.7 233.9" stroke="#7a6555" stroke-width="0.9" opacity="0.47"/><path d="M1357.5 278.0 L1363.3 278.4 L1370.0 281.0 L1375.0 283.6" stroke="#d2c6bb" stroke-width="1.1" opacity="0.47"/><path d="M1232.4 415.5 L1237.8 409.4 L1241.9 400.5 L1242.5 390.2" stroke="#d2c6bb" stroke-width="1.0" opacity="0.35"/><path d="M1328.7 392.3 L1331.6 387.9 L1339.3 380.6 L1344.6 377.5" stroke="#c0b2a4" stroke-width="1.3" opacity="0.48"/><path d="M1341.1 380.9 L1334.0 379.2 L1327.7 377.0 L1322.8 375.1" stroke="#5e4c40" stroke-width="0.9" opacity="0.58"/><path d="M1171.5 385.8 L1175.1 380.1 L1176.8 375.6" stroke="#d2c6bb" stroke-width="1.3" opacity="0.47"/><path d="M1273.6 266.7 L1283.4 265.9 L1290.2 264.8 L1297.6 267.8" stroke="#d2c6bb" stroke-width="0.9" opacity="0.46"/><path d="M1334.1 302.7 L1329.2 294.8 L1321.7 291.6 L1317.1 290.0" stroke="#d2c6bb" stroke-width="1.3" opacity="0.59"/><path d="M1419.0 329.2 L1428.1 324.7 L1437.2 325.2" stroke="#5e4c40" stroke-width="1.3" opacity="0.43"/><path d="M1371.8 334.3 L1375.5 327.7 L1381.4 319.4" stroke="#8a7564" stroke-width="0.7" opacity="0.37"/><path d="M1242.5 277.0 L1233.4 273.6 L1227.6 270.6 L1223.4 271.4" stroke="#5e4c40" stroke-width="0.9" opacity="0.45"/><path d="M1425.9 431.6 L1428.3 426.7 L1426.9 418.0" stroke="#5e4c40" stroke-width="1.3" opacity="0.41"/><path d="M1410.2 435.9 L1409.2 430.7 L1406.3 427.5" stroke="#c0b2a4" stroke-width="1.3" opacity="0.59"/><path d="M1235.2 299.6 L1244.0 299.7 L1250.0 295.8 L1253.7 291.6" stroke="#c0b2a4" stroke-width="1.2" opacity="0.38"/><path d="M1364.1 318.8 L1362.4 312.5 L1361.0 302.4 L1358.7 297.2" stroke="#7a6555" stroke-width="1.2" opacity="0.38"/><path d="M1440.1 304.4 L1440.9 300.4 L1441.8 292.7" stroke="#d2c6bb" stroke-width="0.8" opacity="0.39"/><path d="M1374.4 258.3 L1374.5 253.0 L1368.1 244.1" stroke="#8a7564" stroke-width="1.3" opacity="0.48"/><path d="M1156.8 411.3 L1150.7 406.2 L1146.7 401.1" stroke="#6e5a4c" stroke-width="1.1" opacity="0.45"/><path d="M1400.3 362.2 L1403.9 354.8 L1405.6 350.4" stroke="#c0b2a4" stroke-width="1.0" opacity="0.53"/><path d="M1383.3 387.5 L1382.2 379.8 L1378.4 372.5 L1379.4 367.1" stroke="#6e5a4c" stroke-width="1.1" opacity="0.56"/><path d="M1208.0 236.0 L1199.1 232.3 L1193.4 225.3 L1189.5 223.8" stroke="#7a6555" stroke-width="1.1" opacity="0.46"/><path d="M1198.3 273.7 L1191.3 266.9 L1187.5 258.2 L1186.0 250.9" stroke="#d2c6bb" stroke-width="0.8" opacity="0.38"/><path d="M1202.2 363.7 L1205.1 360.4 L1207.2 354.2 L1203.9 343.9" stroke="#8a7564" stroke-width="1.2" opacity="0.48"/><path d="M1194.9 376.5 L1194.7 372.5 L1190.2 366.2" stroke="#d2c6bb" stroke-width="0.9" opacity="0.43"/><path d="M1443.9 380.9 L1444.3 374.8 L1443.9 364.9" stroke="#6e5a4c" stroke-width="1.4" opacity="0.41"/><path d="M1253.4 432.6 L1255.5 427.9 L1263.0 419.8" stroke="#d2c6bb" stroke-width="1.2" opacity="0.56"/><path d="M1326.7 410.1 L1321.9 400.7 L1315.9 397.7 L1309.1 396.9" stroke="#d2c6bb" stroke-width="1.3" opacity="0.44"/><path d="M1271.7 340.8 L1278.6 339.3 L1287.0 341.8 L1292.4 342.6" stroke="#6e5a4c" stroke-width="0.7" opacity="0.38"/><path d="M1430.2 347.2 L1431.4 339.7 L1429.4 331.4 L1425.9 328.3" stroke="#c0b2a4" stroke-width="1.4" opacity="0.41"/><path d="M1377.3 371.5 L1388.3 370.8 L1394.7 373.9" stroke="#8a7564" stroke-width="0.9" opacity="0.53"/><path d="M1269.9 256.5 L1262.3 257.1 L1256.9 258.2" stroke="#8a7564" stroke-width="1.1" opacity="0.34"/><path d="M1360.2 261.7 L1361.1 256.8 L1363.8 251.4 L1365.8 244.9" stroke="#5e4c40" stroke-width="0.9" opacity="0.39"/><path d="M1255.7 251.1 L1247.3 247.4 L1244.4 244.5" stroke="#c0b2a4" stroke-width="0.9" opacity="0.50"/><path d="M1355.2 358.0 L1360.7 356.7 L1365.1 355.2 L1369.0 349.8" stroke="#8a7564" stroke-width="1.4" opacity="0.39"/><path d="M1359.3 252.5 L1363.5 246.6 L1365.7 238.2" stroke="#6e5a4c" stroke-width="1.2" opacity="0.57"/><path d="M1388.4 313.4 L1380.0 310.6 L1373.3 309.7 L1368.8 309.8" stroke="#6e5a4c" stroke-width="1.0" opacity="0.55"/><path d="M1242.7 370.4 L1245.6 367.5 L1253.4 360.8" stroke="#5e4c40" stroke-width="1.3" opacity="0.57"/><path d="M1341.6 291.1 L1341.3 286.9 L1337.8 282.6 L1335.3 279.1" stroke="#d2c6bb" stroke-width="1.0" opacity="0.38"/><path d="M1395.8 408.5 L1392.7 405.5 L1386.2 401.7 L1383.7 395.7" stroke="#7a6555" stroke-width="1.1" opacity="0.38"/><path d="M1230.6 252.2 L1231.2 248.2 L1236.0 239.5 L1239.7 236.9" stroke="#c0b2a4" stroke-width="1.4" opacity="0.40"/><path d="M1256.2 410.1 L1254.6 401.3 L1257.4 391.0" stroke="#7a6555" stroke-width="0.9" opacity="0.51"/><path d="M1388.6 269.6 L1387.3 260.5 L1384.6 255.5 L1379.5 251.8" stroke="#d2c6bb" stroke-width="1.2" opacity="0.56"/><path d="M1441.9 393.8 L1445.7 390.9 L1453.0 385.0 L1458.0 384.1" stroke="#8a7564" stroke-width="0.7" opacity="0.38"/><path d="M1302.7 388.8 L1302.7 382.2 L1305.3 377.6 L1308.3 373.1" stroke="#7a6555" stroke-width="1.1" opacity="0.43"/><path d="M1360.3 347.6 L1363.4 343.8 L1365.9 335.5" stroke="#7a6555" stroke-width="1.4" opacity="0.44"/><path d="M1356.5 387.4 L1363.8 382.5 L1370.0 376.8 L1380.6 376.2" stroke="#6e5a4c" stroke-width="0.8" opacity="0.60"/><path d="M1259.0 327.6 L1259.7 321.3 L1260.4 313.6 L1259.2 307.1" stroke="#c0b2a4" stroke-width="0.9" opacity="0.42"/><path d="M1334.5 381.4 L1341.0 375.5 L1346.8 374.1 L1353.7 375.8" stroke="#d2c6bb" stroke-width="1.4" opacity="0.38"/><path d="M1336.7 264.9 L1333.7 260.4 L1326.7 256.7 L1324.1 253.6" stroke="#c0b2a4" stroke-width="0.8" opacity="0.35"/><path d="M1295.7 436.3 L1290.2 431.4 L1282.1 426.1 L1278.6 423.4" stroke="#c0b2a4" stroke-width="1.3" opacity="0.38"/><path d="M1210.5 268.9 L1210.6 260.9 L1212.7 257.1 L1218.4 248.2" stroke="#c0b2a4" stroke-width="0.8" opacity="0.41"/><path d="M1373.8 273.5 L1368.4 264.8 L1367.2 258.4" stroke="#5e4c40" stroke-width="1.3" opacity="0.54"/><path d="M1368.5 294.6 L1375.8 286.9 L1381.5 278.9" stroke="#d2c6bb" stroke-width="0.7" opacity="0.47"/><path d="M1221.7 292.1 L1217.1 283.5 L1211.6 277.1 L1210.8 271.2" stroke="#5e4c40" stroke-width="1.1" opacity="0.38"/><path d="M1217.7 242.7 L1211.8 237.6 L1206.6 236.7" stroke="#7a6555" stroke-width="1.0" opacity="0.35"/><path d="M1162.4 294.7 L1156.9 291.6 L1146.3 290.4" stroke="#7a6555" stroke-width="0.9" opacity="0.53"/><path d="M1187.3 434.0 L1189.1 426.8 L1195.5 418.8" stroke="#6e5a4c" stroke-width="1.2" opacity="0.58"/><path d="M1249.1 243.5 L1248.4 238.5 L1248.7 231.9" stroke="#7a6555" stroke-width="1.1" opacity="0.40"/><path d="M1283.0 369.3 L1283.8 364.6 L1284.5 355.4" stroke="#8a7564" stroke-width="1.0" opacity="0.42"/><path d="M1222.5 342.4 L1223.5 334.7 L1220.6 329.5" stroke="#6e5a4c" stroke-width="1.4" opacity="0.35"/><path d="M1291.4 435.3 L1294.3 430.8 L1293.9 423.0 L1297.1 412.7" stroke="#8a7564" stroke-width="0.8" opacity="0.36"/><path d="M1423.0 387.2 L1415.8 380.9 L1404.9 379.8" stroke="#6e5a4c" stroke-width="1.2" opacity="0.38"/><path d="M1389.3 307.6 L1388.2 302.3 L1382.2 296.4 L1379.1 289.1" stroke="#8a7564" stroke-width="1.3" opacity="0.32"/><path d="M1407.4 430.5 L1397.7 430.0 L1392.7 426.1" stroke="#7a6555" stroke-width="1.3" opacity="0.34"/><path d="M1208.5 292.1 L1211.5 282.2 L1210.2 271.4 L1213.6 263.7" stroke="#c0b2a4" stroke-width="1.4" opacity="0.47"/><path d="M1392.0 365.9 L1395.9 358.2 L1400.0 354.6 L1404.3 351.6" stroke="#6e5a4c" stroke-width="0.8" opacity="0.33"/><path d="M1428.0 344.6 L1424.7 342.2 L1421.5 337.8" stroke="#5e4c40" stroke-width="1.2" opacity="0.36"/><path d="M1176.6 263.0 L1172.4 258.9 L1167.6 257.9 L1160.0 257.3" stroke="#8a7564" stroke-width="1.1" opacity="0.39"/><path d="M1402.9 360.4 L1404.6 353.9 L1406.0 345.8 L1406.3 341.3" stroke="#5e4c40" stroke-width="1.1" opacity="0.50"/><path d="M1233.3 356.8 L1229.3 356.0 L1223.1 350.7" stroke="#8a7564" stroke-width="1.0" opacity="0.40"/><path d="M1393.1 401.5 L1392.0 394.4 L1384.9 388.1" stroke="#6e5a4c" stroke-width="1.2" opacity="0.50"/><path d="M1255.4 412.8 L1260.7 406.0 L1261.6 401.6" stroke="#d2c6bb" stroke-width="0.9" opacity="0.50"/><path d="M1331.0 430.0 L1336.2 425.3 L1338.4 417.8 L1342.1 415.4" stroke="#c0b2a4" stroke-width="1.0" opacity="0.50"/><path d="M1219.0 434.6 L1212.8 427.0 L1211.6 422.5 L1213.0 418.7" stroke="#c0b2a4" stroke-width="1.1" opacity="0.52"/><path d="M1229.2 392.3 L1230.0 385.3 L1229.6 378.7" stroke="#6e5a4c" stroke-width="0.8" opacity="0.42"/><path d="M1318.2 430.9 L1322.2 426.3 L1325.7 423.0" stroke="#7a6555" stroke-width="1.2" opacity="0.45"/><path d="M1245.1 283.6 L1245.7 276.4 L1242.6 268.8 L1238.9 265.9" stroke="#6e5a4c" stroke-width="1.3" opacity="0.45"/><path d="M1197.6 333.7 L1190.7 333.1 L1186.4 330.5" stroke="#c0b2a4" stroke-width="1.2" opacity="0.41"/><path d="M1241.0 346.6 L1243.6 341.1 L1250.4 335.9 L1253.5 332.9" stroke="#6e5a4c" stroke-width="0.9" opacity="0.46"/><path d="M1345.9 299.4 L1354.5 299.2 L1365.1 300.0" stroke="#d2c6bb" stroke-width="1.3" opacity="0.33"/><path d="M1336.8 263.4 L1337.9 256.9 L1337.7 249.6" stroke="#8a7564" stroke-width="0.9" opacity="0.34"/><path d="M1245.9 325.9 L1239.5 321.4 L1233.9 321.1 L1227.5 322.5" stroke="#8a7564" stroke-width="1.4" opacity="0.46"/><path d="M1308.3 373.8 L1307.6 369.8 L1303.9 359.7" stroke="#d2c6bb" stroke-width="1.2" opacity="0.55"/><path d="M1216.6 380.7 L1210.1 377.1 L1200.9 378.3" stroke="#6e5a4c" stroke-width="0.8" opacity="0.48"/><path d="M1389.4 423.7 L1390.0 416.9 L1385.9 409.2 L1385.6 398.3" stroke="#5e4c40" stroke-width="0.7" opacity="0.34"/><path d="M1201.1 267.7 L1199.6 263.6 L1201.5 256.0 L1198.1 248.2" stroke="#c0b2a4" stroke-width="1.2" opacity="0.47"/><path d="M1157.6 374.6 L1154.0 370.9 L1145.6 368.3" stroke="#8a7564" stroke-width="1.2" opacity="0.54"/><path d="M1284.6 412.7 L1288.7 402.8 L1294.9 395.2" stroke="#c0b2a4" stroke-width="0.8" opacity="0.39"/><path d="M1431.7 332.8 L1435.1 329.6 L1440.1 329.0" stroke="#7a6555" stroke-width="1.3" opacity="0.44"/><path d="M1165.1 302.4 L1164.9 294.9 L1167.3 288.7 L1170.4 285.1" stroke="#7a6555" stroke-width="1.2" opacity="0.40"/><path d="M1160.3 395.1 L1163.6 387.7 L1167.0 381.9 L1170.3 372.6" stroke="#d2c6bb" stroke-width="0.8" opacity="0.51"/><path d="M1297.5 349.9 L1292.3 343.7 L1291.3 339.4 L1291.7 332.7" stroke="#8a7564" stroke-width="1.3" opacity="0.32"/><path d="M1207.9 298.1 L1205.9 290.9 L1199.0 284.7 L1196.9 278.9" stroke="#6e5a4c" stroke-width="1.4" opacity="0.41"/><path d="M1202.1 316.2 L1205.9 306.2 L1204.0 296.8 L1198.7 288.9" stroke="#7a6555" stroke-width="1.3" opacity="0.52"/><path d="M1255.5 238.7 L1253.8 228.5 L1250.8 220.2" stroke="#c0b2a4" stroke-width="1.3" opacity="0.48"/><path d="M1396.1 432.7 L1392.8 430.2 L1387.5 428.0 L1381.7 428.8" stroke="#8a7564" stroke-width="0.8" opacity="0.31"/><path d="M1385.4 423.6 L1383.6 418.8 L1381.7 409.0 L1382.8 401.2" stroke="#d2c6bb" stroke-width="1.2" opacity="0.51"/><path d="M1326.3 351.3 L1319.9 342.9 L1311.7 338.0 L1305.0 335.5" stroke="#c0b2a4" stroke-width="0.9" opacity="0.49"/><path d="M1234.2 372.2 L1238.8 362.6 L1245.2 354.2" stroke="#6e5a4c" stroke-width="0.9" opacity="0.30"/><path d="M1425.8 427.8 L1424.4 421.8 L1424.5 417.3 L1421.8 413.8" stroke="#d2c6bb" stroke-width="0.8" opacity="0.57"/><path d="M1437.6 431.0 L1444.4 429.2 L1449.0 429.4" stroke="#d2c6bb" stroke-width="1.0" opacity="0.36"/><path d="M1359.8 298.9 L1354.2 292.0 L1353.0 281.5" stroke="#6e5a4c" stroke-width="0.8" opacity="0.39"/><path d="M1253.0 366.4 L1262.9 368.0 L1267.0 368.5" stroke="#d2c6bb" stroke-width="1.4" opacity="0.47"/><path d="M1415.6 274.9 L1405.0 273.8 L1401.1 271.0" stroke="#6e5a4c" stroke-width="1.0" opacity="0.34"/><path d="M1209.9 343.3 L1211.0 339.5 L1218.7 333.9" stroke="#7a6555" stroke-width="1.0" opacity="0.40"/><path d="M1378.6 262.2 L1378.8 254.5 L1383.8 247.6 L1385.3 240.9" stroke="#7a6555" stroke-width="0.9" opacity="0.44"/><path d="M1382.5 278.9 L1378.4 271.8 L1370.9 268.9 L1364.9 270.4" stroke="#d2c6bb" stroke-width="0.9" opacity="0.52"/><path d="M1350.8 387.3 L1351.9 378.6 L1348.5 372.4" stroke="#d2c6bb" stroke-width="1.4" opacity="0.41"/><path d="M1259.0 415.9 L1269.0 411.3 L1275.0 404.9 L1278.7 394.7" stroke="#5e4c40" stroke-width="1.1" opacity="0.58"/><path d="M1175.7 430.9 L1181.5 426.2 L1185.9 425.7" stroke="#7a6555" stroke-width="0.7" opacity="0.35"/><path d="M1298.4 253.6 L1290.0 247.3 L1287.2 238.8" stroke="#7a6555" stroke-width="0.9" opacity="0.51"/><path d="M1224.5 401.2 L1230.8 399.5 L1238.4 392.3 L1248.4 391.4" stroke="#c0b2a4" stroke-width="0.9" opacity="0.31"/><path d="M1244.7 243.3 L1237.5 237.4 L1226.9 236.4 L1222.0 239.0" stroke="#5e4c40" stroke-width="1.4" opacity="0.58"/><path d="M1434.9 351.3 L1432.1 342.1 L1430.9 335.0 L1428.8 325.3" stroke="#7a6555" stroke-width="0.8" opacity="0.44"/><path d="M1352.1 304.0 L1349.7 298.5 L1350.1 291.7" stroke="#6e5a4c" stroke-width="0.7" opacity="0.43"/><path d="M1433.9 345.1 L1428.7 346.0 L1424.5 350.5" stroke="#5e4c40" stroke-width="1.3" opacity="0.47"/><path d="M1354.8 259.4 L1360.7 256.9 L1367.7 252.8" stroke="#d2c6bb" stroke-width="1.1" opacity="0.38"/><path d="M1430.4 316.5 L1434.2 310.3 L1442.5 304.0" stroke="#c0b2a4" stroke-width="0.9" opacity="0.47"/><path d="M1272.7 366.4 L1265.2 362.4 L1257.9 362.7" stroke="#c0b2a4" stroke-width="1.3" opacity="0.45"/><path d="M1299.5 263.8 L1299.3 259.4 L1294.1 252.7 L1289.2 251.5" stroke="#d2c6bb" stroke-width="1.0" opacity="0.33"/><path d="M1395.6 389.1 L1392.2 383.0 L1386.8 373.9" stroke="#8a7564" stroke-width="0.8" opacity="0.39"/><path d="M1348.4 319.2 L1355.9 314.5 L1361.6 312.6" stroke="#7a6555" stroke-width="1.2" opacity="0.54"/><path d="M1361.7 391.9 L1364.9 388.3 L1365.8 379.4" stroke="#6e5a4c" stroke-width="1.4" opacity="0.50"/><path d="M1292.1 352.7 L1298.6 344.3 L1302.0 341.6 L1306.8 341.6" stroke="#8a7564" stroke-width="0.9" opacity="0.36"/><path d="M1356.6 379.7 L1365.8 378.7 L1372.7 377.1" stroke="#8a7564" stroke-width="1.2" opacity="0.56"/><path d="M1320.5 423.6 L1323.9 419.2 L1327.9 417.7 L1335.1 419.9" stroke="#7a6555" stroke-width="1.2" opacity="0.53"/><path d="M1356.7 322.3 L1348.8 318.3 L1344.9 313.8 L1341.1 311.1" stroke="#6e5a4c" stroke-width="1.3" opacity="0.39"/><path d="M1431.1 346.8 L1436.0 342.7 L1441.7 337.7" stroke="#6e5a4c" stroke-width="0.8" opacity="0.51"/><path d="M1170.5 379.3 L1171.6 374.0 L1171.4 368.3 L1168.6 364.8" stroke="#5e4c40" stroke-width="0.9" opacity="0.56"/><path d="M1403.6 326.0 L1402.6 316.5 L1401.6 312.0" stroke="#8a7564" stroke-width="1.2" opacity="0.53"/><path d="M1316.4 352.0 L1323.3 347.6 L1324.9 343.9 L1329.7 341.5" stroke="#d2c6bb" stroke-width="0.8" opacity="0.47"/><path d="M1234.8 370.6 L1239.7 367.4 L1241.3 363.4 L1245.2 361.2" stroke="#8a7564" stroke-width="0.8" opacity="0.38"/><path d="M1417.4 330.4 L1408.9 328.2 L1404.0 327.4 L1397.0 323.6" stroke="#8a7564" stroke-width="1.3" opacity="0.37"/><path d="M1405.5 296.9 L1401.0 293.4 L1395.0 290.2" stroke="#c0b2a4" stroke-width="1.0" opacity="0.44"/><path d="M1186.5 426.0 L1197.3 424.4 L1207.8 424.9 L1212.9 421.2" stroke="#c0b2a4" stroke-width="1.1" opacity="0.42"/><path d="M1271.3 410.2 L1265.8 403.1 L1261.3 398.3" stroke="#8a7564" stroke-width="1.0" opacity="0.36"/><path d="M1162.7 406.8 L1164.8 399.9 L1167.1 390.0" stroke="#8a7564" stroke-width="1.2" opacity="0.45"/><path d="M1387.4 420.4 L1393.3 413.4 L1402.1 411.3" stroke="#c0b2a4" stroke-width="1.4" opacity="0.44"/><path d="M1217.5 270.7 L1223.8 266.2 L1229.8 264.1" stroke="#6e5a4c" stroke-width="1.3" opacity="0.40"/><path d="M1265.8 404.7 L1260.8 397.0 L1253.8 394.3" stroke="#7a6555" stroke-width="1.3" opacity="0.42"/><path d="M1326.6 368.8 L1329.2 361.1 L1332.8 353.0 L1339.7 349.4" stroke="#7a6555" stroke-width="1.2" opacity="0.48"/><path d="M1390.0 320.6 L1382.9 317.7 L1378.5 315.0 L1371.3 307.6" stroke="#5e4c40" stroke-width="1.3" opacity="0.59"/><path d="M1169.9 309.7 L1175.7 304.1 L1181.6 301.5 L1185.1 298.7" stroke="#c0b2a4" stroke-width="0.8" opacity="0.41"/><path d="M1218.4 367.2 L1211.9 363.0 L1208.0 357.4" stroke="#c0b2a4" stroke-width="1.3" opacity="0.58"/><path d="M1228.2 242.2 L1219.7 242.4 L1215.6 245.8" stroke="#6e5a4c" stroke-width="1.2" opacity="0.31"/><path d="M1392.7 403.7 L1385.5 398.4 L1375.7 395.9 L1368.4 396.0" stroke="#8a7564" stroke-width="1.3" opacity="0.54"/><path d="M1237.3 319.7 L1232.8 312.9 L1232.9 304.4" stroke="#8a7564" stroke-width="1.3" opacity="0.35"/><path d="M1208.7 340.5 L1214.0 336.8 L1219.5 336.4 L1228.6 332.0" stroke="#5e4c40" stroke-width="0.7" opacity="0.45"/><path d="M1349.3 401.5 L1349.3 396.8 L1353.3 391.8" stroke="#d2c6bb" stroke-width="1.1" opacity="0.42"/><path d="M1385.2 299.0 L1388.3 291.7 L1391.4 287.7" stroke="#6e5a4c" stroke-width="1.0" opacity="0.39"/><path d="M1318.2 284.3 L1312.2 275.8 L1309.3 272.9" stroke="#8a7564" stroke-width="1.1" opacity="0.38"/><path d="M1188.6 400.5 L1191.5 395.0 L1197.2 387.7" stroke="#c0b2a4" stroke-width="1.0" opacity="0.52"/><path d="M1226.6 393.6 L1224.5 386.6 L1225.5 378.9 L1222.8 369.0" stroke="#6e5a4c" stroke-width="0.9" opacity="0.42"/><path d="M1287.8 323.7 L1288.1 314.8 L1287.3 307.7 L1290.5 300.5" stroke="#c0b2a4" stroke-width="1.3" opacity="0.55"/><path d="M1177.5 258.5 L1183.6 254.0 L1191.8 248.2 L1195.7 238.0" stroke="#6e5a4c" stroke-width="0.7" opacity="0.34"/><path d="M1268.6 351.6 L1262.3 346.4 L1259.8 342.8 L1258.7 338.4" stroke="#7a6555" stroke-width="1.2" opacity="0.37"/><path d="M1285.2 328.8 L1284.9 324.8 L1285.6 314.3" stroke="#7a6555" stroke-width="1.2" opacity="0.40"/><path d="M1432.8 332.4 L1429.8 327.4 L1428.3 318.5" stroke="#6e5a4c" stroke-width="0.9" opacity="0.52"/><path d="M1362.8 387.5 L1368.2 378.8 L1377.3 372.8" stroke="#c0b2a4" stroke-width="0.8" opacity="0.49"/><path d="M1333.8 421.7 L1329.7 416.4 L1327.6 411.0 L1325.7 406.1" stroke="#6e5a4c" stroke-width="0.9" opacity="0.38"/><path d="M1421.2 359.8 L1412.8 356.9 L1403.9 351.2" stroke="#6e5a4c" stroke-width="1.4" opacity="0.50"/><path d="M1337.5 290.8 L1339.2 287.1 L1338.4 279.0 L1335.1 274.4" stroke="#5e4c40" stroke-width="1.4" opacity="0.41"/><path d="M1251.4 235.2 L1249.1 230.2 L1247.1 221.8" stroke="#c0b2a4" stroke-width="0.9" opacity="0.36"/><path d="M1210.8 310.9 L1219.5 307.9 L1224.8 300.5 L1226.0 290.8" stroke="#7a6555" stroke-width="1.1" opacity="0.57"/><path d="M1225.8 353.4 L1221.4 351.1 L1214.7 342.5" stroke="#d2c6bb" stroke-width="0.8" opacity="0.39"/><path d="M1211.2 226.6 L1210.0 222.2 L1206.3 213.5" stroke="#8a7564" stroke-width="1.1" opacity="0.45"/><path d="M1268.1 312.4 L1262.9 311.3 L1259.9 308.5" stroke="#d2c6bb" stroke-width="1.3" opacity="0.39"/><path d="M1238.6 357.5 L1228.4 355.5 L1219.9 356.7 L1214.5 359.6" stroke="#6e5a4c" stroke-width="1.2" opacity="0.58"/><path d="M1209.7 293.2 L1214.5 293.2 L1222.4 297.8 L1227.6 301.8" stroke="#d2c6bb" stroke-width="1.3" opacity="0.47"/><path d="M1413.2 436.8 L1417.1 426.8 L1420.1 420.6 L1423.8 417.4" stroke="#6e5a4c" stroke-width="1.0" opacity="0.47"/><path d="M1216.3 426.4 L1218.0 419.5 L1217.0 408.6 L1218.2 402.2" stroke="#7a6555" stroke-width="1.1" opacity="0.38"/><path d="M1265.9 344.0 L1265.5 340.0 L1263.0 334.3" stroke="#d2c6bb" stroke-width="1.1" opacity="0.32"/><path d="M1362.9 255.1 L1368.4 246.8 L1370.7 240.2 L1371.1 233.4" stroke="#c0b2a4" stroke-width="1.2" opacity="0.46"/><path d="M1334.8 416.8 L1337.4 412.7 L1341.1 404.7" stroke="#7a6555" stroke-width="1.1" opacity="0.36"/><path d="M1350.6 285.0 L1349.4 280.5 L1350.7 273.4 L1353.0 264.9" stroke="#5e4c40" stroke-width="1.4" opacity="0.32"/><path d="M1343.3 312.8 L1333.4 311.6 L1327.6 314.5" stroke="#c0b2a4" stroke-width="1.3" opacity="0.40"/><path d="M1190.8 359.1 L1195.9 353.1 L1204.1 347.3 L1210.7 338.7" stroke="#5e4c40" stroke-width="1.1" opacity="0.44"/><path d="M1159.1 312.9 L1152.1 310.1 L1147.8 307.6" stroke="#c0b2a4" stroke-width="0.8" opacity="0.59"/><path d="M1331.8 299.5 L1329.0 289.4 L1321.4 282.9 L1318.8 278.9" stroke="#d2c6bb" stroke-width="0.8" opacity="0.50"/><path d="M1199.5 235.3 L1197.2 226.3 L1194.7 220.8" stroke="#7a6555" stroke-width="1.2" opacity="0.30"/><path d="M1204.8 233.7 L1200.1 224.6 L1199.1 220.3" stroke="#7a6555" stroke-width="0.9" opacity="0.35"/><path d="M1170.1 367.1 L1166.6 363.8 L1160.1 358.2" stroke="#7a6555" stroke-width="1.3" opacity="0.57"/><path d="M1207.6 317.3 L1206.2 312.0 L1207.6 307.7 L1212.7 298.4" stroke="#5e4c40" stroke-width="0.7" opacity="0.43"/><path d="M1424.9 430.9 L1428.7 427.7 L1439.2 425.8" stroke="#7a6555" stroke-width="0.8" opacity="0.46"/><path d="M1408.8 341.0 L1404.8 336.1 L1401.6 327.8" stroke="#8a7564" stroke-width="0.7" opacity="0.45"/><path d="M1222.8 257.7 L1220.5 251.6 L1222.0 246.6 L1220.3 238.5" stroke="#c0b2a4" stroke-width="1.1" opacity="0.46"/><path d="M1438.9 396.7 L1444.5 392.8 L1449.4 388.3 L1455.1 385.0" stroke="#5e4c40" stroke-width="1.0" opacity="0.47"/><path d="M1233.5 363.1 L1229.5 357.8 L1225.0 354.2 L1222.8 350.1" stroke="#5e4c40" stroke-width="1.1" opacity="0.49"/><path d="M1358.2 432.3 L1361.9 425.5 L1361.3 418.1" stroke="#6e5a4c" stroke-width="0.9" opacity="0.44"/><path d="M1214.3 268.9 L1213.1 262.9 L1212.5 257.4 L1211.6 248.0" stroke="#6e5a4c" stroke-width="0.8" opacity="0.32"/><path d="M1384.9 342.9 L1378.1 340.3 L1372.4 338.0 L1365.3 337.7" stroke="#7a6555" stroke-width="1.0" opacity="0.58"/><path d="M1406.9 336.1 L1403.5 332.1 L1396.7 329.0" stroke="#d2c6bb" stroke-width="0.8" opacity="0.60"/><path d="M1323.0 412.6 L1330.7 408.9 L1340.0 407.0 L1345.0 406.1" stroke="#8a7564" stroke-width="1.3" opacity="0.52"/><path d="M1414.8 344.1 L1416.3 339.7 L1415.7 335.4 L1411.3 325.6" stroke="#8a7564" stroke-width="0.8" opacity="0.35"/><path d="M1321.9 348.9 L1328.5 341.5 L1331.3 338.7" stroke="#6e5a4c" stroke-width="1.3" opacity="0.36"/><path d="M1256.6 353.6 L1259.7 347.4 L1261.9 342.5" stroke="#5e4c40" stroke-width="0.7" opacity="0.44"/><path d="M1314.3 341.3 L1317.4 338.8 L1323.8 331.2 L1328.4 329.2" stroke="#8a7564" stroke-width="0.8" opacity="0.53"/><path d="M1392.4 422.1 L1387.7 417.6 L1377.5 415.6" stroke="#6e5a4c" stroke-width="1.0" opacity="0.34"/><path d="M1257.9 257.2 L1260.2 250.5 L1261.3 243.3 L1264.1 236.7" stroke="#c0b2a4" stroke-width="1.3" opacity="0.59"/><path d="M1308.0 333.3 L1317.9 330.9 L1322.9 328.4" stroke="#6e5a4c" stroke-width="0.9" opacity="0.41"/><path d="M1245.9 232.5 L1244.7 226.3 L1243.0 220.1 L1236.8 213.0" stroke="#6e5a4c" stroke-width="0.8" opacity="0.41"/><path d="M1185.0 429.6 L1194.9 426.3 L1205.1 429.3" stroke="#7a6555" stroke-width="1.3" opacity="0.40"/><path d="M1288.6 414.2 L1286.1 409.4 L1281.6 400.4 L1278.5 397.3" stroke="#5e4c40" stroke-width="1.3" opacity="0.42"/><path d="M1178.3 402.9 L1179.0 397.2 L1177.5 391.1 L1174.0 388.2" stroke="#8a7564" stroke-width="0.9" opacity="0.39"/><path d="M1423.4 327.6 L1418.9 320.1 L1414.1 314.5 L1408.3 313.1" stroke="#5e4c40" stroke-width="1.2" opacity="0.35"/><path d="M1224.7 390.5 L1225.8 384.1 L1222.2 377.3" stroke="#6e5a4c" stroke-width="1.0" opacity="0.55"/><path d="M1267.6 263.9 L1265.0 255.6 L1263.5 248.0" stroke="#d2c6bb" stroke-width="1.1" opacity="0.60"/><path d="M1422.3 397.4 L1424.9 389.7 L1426.6 386.0" stroke="#d2c6bb" stroke-width="0.9" opacity="0.57"/><path d="M1339.2 394.2 L1340.1 388.8 L1345.6 380.2 L1345.4 374.3" stroke="#c0b2a4" stroke-width="1.0" opacity="0.58"/><path d="M1326.1 366.1 L1319.1 363.8 L1315.9 360.3 L1305.9 357.0" stroke="#8a7564" stroke-width="0.8" opacity="0.47"/><path d="M1267.1 322.1 L1272.4 315.8 L1282.4 312.7" stroke="#d2c6bb" stroke-width="0.9" opacity="0.37"/><path d="M1288.9 352.5 L1288.9 343.9 L1284.6 336.4 L1286.3 326.0" stroke="#6e5a4c" stroke-width="1.2" opacity="0.33"/><path d="M1190.2 219.2 L1194.5 213.5 L1201.6 206.0" stroke="#7a6555" stroke-width="1.2" opacity="0.53"/><path d="M1303.2 264.3 L1299.4 255.9 L1300.6 250.2 L1303.3 245.8" stroke="#6e5a4c" stroke-width="1.4" opacity="0.58"/><path d="M1399.1 401.1 L1409.2 399.7 L1415.9 393.4" stroke="#8a7564" stroke-width="0.7" opacity="0.52"/><path d="M1297.0 411.8 L1304.4 405.0 L1308.5 400.4 L1312.9 399.7" stroke="#8a7564" stroke-width="1.2" opacity="0.54"/><path d="M1289.6 248.6 L1292.4 244.4 L1301.4 239.2" stroke="#7a6555" stroke-width="0.9" opacity="0.42"/><path d="M1356.9 416.4 L1362.8 410.0 L1365.2 405.4" stroke="#7a6555" stroke-width="0.9" opacity="0.40"/><path d="M1176.6 357.4 L1169.6 352.3 L1166.7 343.1" stroke="#8a7564" stroke-width="1.0" opacity="0.30"/><path d="M1333.5 351.3 L1335.1 345.0 L1339.0 335.9 L1344.6 326.6" stroke="#6e5a4c" stroke-width="1.2" opacity="0.60"/><path d="M1289.6 412.6 L1292.3 405.2 L1294.2 401.2" stroke="#5e4c40" stroke-width="0.9" opacity="0.51"/><path d="M1184.1 272.4 L1183.1 267.9 L1178.1 263.7" stroke="#d2c6bb" stroke-width="1.4" opacity="0.36"/><path d="M1309.4 253.6 L1303.9 249.5 L1301.2 243.7 L1299.9 235.5" stroke="#5e4c40" stroke-width="0.7" opacity="0.40"/><path d="M1238.2 393.3 L1246.9 388.1 L1249.1 384.3" stroke="#c0b2a4" stroke-width="0.8" opacity="0.55"/><path d="M1310.5 346.2 L1317.5 341.6 L1322.4 341.9" stroke="#d2c6bb" stroke-width="1.4" opacity="0.32"/><path d="M1283.2 394.8 L1284.5 389.1 L1286.7 383.4" stroke="#5e4c40" stroke-width="1.3" opacity="0.59"/><path d="M1318.5 249.6 L1322.8 240.2 L1329.1 234.9 L1334.8 230.3" stroke="#c0b2a4" stroke-width="0.8" opacity="0.52"/><path d="M1412.2 394.0 L1411.8 386.5 L1412.7 380.7 L1413.1 376.7" stroke="#6e5a4c" stroke-width="0.9" opacity="0.35"/><path d="M1275.8 370.5 L1281.2 366.3 L1284.6 361.4" stroke="#5e4c40" stroke-width="0.9" opacity="0.53"/><path d="M1262.0 245.1 L1257.2 237.2 L1249.7 234.0" stroke="#7a6555" stroke-width="1.3" opacity="0.51"/><path d="M1252.6 292.4 L1256.9 288.7 L1257.9 283.8 L1258.7 276.4" stroke="#5e4c40" stroke-width="1.1" opacity="0.56"/><path d="M1244.6 244.7 L1244.6 240.5 L1238.6 232.3 L1231.1 227.5" stroke="#c0b2a4" stroke-width="1.3" opacity="0.54"/><path d="M1214.6 270.0 L1220.7 261.6 L1220.6 253.8 L1224.2 248.2" stroke="#6e5a4c" stroke-width="0.8" opacity="0.50"/><path d="M1156.7 417.4 L1161.0 417.4 L1166.0 420.1 L1171.4 421.7" stroke="#5e4c40" stroke-width="0.7" opacity="0.43"/><path d="M1389.5 262.2 L1397.2 259.9 L1402.9 258.6" stroke="#8a7564" stroke-width="1.1" opacity="0.51"/><path d="M1429.9 364.6 L1429.1 359.8 L1431.8 354.9" stroke="#d2c6bb" stroke-width="1.2" opacity="0.42"/><path d="M1170.4 228.6 L1178.7 222.7 L1183.9 213.1 L1192.0 209.1" stroke="#7a6555" stroke-width="1.4" opacity="0.37"/><path d="M1292.1 282.1 L1299.0 281.8 L1302.8 280.4 L1306.1 277.8" stroke="#d2c6bb" stroke-width="0.8" opacity="0.39"/><path d="M1197.6 316.4 L1191.8 309.9 L1190.7 302.5" stroke="#8a7564" stroke-width="1.3" opacity="0.54"/><path d="M1218.4 281.9 L1215.5 275.1 L1212.6 269.9 L1214.1 259.9" stroke="#7a6555" stroke-width="1.3" opacity="0.58"/><path d="M1234.5 346.2 L1227.8 342.1 L1225.6 335.8" stroke="#8a7564" stroke-width="1.0" opacity="0.36"/><path d="M1180.6 289.7 L1175.6 280.3 L1175.2 272.0" stroke="#c0b2a4" stroke-width="1.0" opacity="0.32"/><path d="M1190.7 218.8 L1187.4 215.4 L1184.1 212.3" stroke="#c0b2a4" stroke-width="0.8" opacity="0.38"/><path d="M1398.6 338.6 L1399.3 334.5 L1401.7 330.5" stroke="#7a6555" stroke-width="1.1" opacity="0.38"/><path d="M1169.5 332.4 L1165.3 326.5 L1158.9 323.8" stroke="#8a7564" stroke-width="0.8" opacity="0.30"/><path d="M1322.5 258.4 L1326.0 250.0 L1325.9 244.2 L1329.5 235.7" stroke="#7a6555" stroke-width="1.3" opacity="0.40"/><path d="M1431.8 338.0 L1426.2 335.3 L1422.6 332.9" stroke="#7a6555" stroke-width="0.7" opacity="0.36"/><path d="M1350.2 412.3 L1353.6 406.7 L1361.9 401.5" stroke="#7a6555" stroke-width="1.1" opacity="0.58"/><path d="M1335.9 338.0 L1330.5 331.8 L1322.1 324.8 L1320.3 319.9" stroke="#c0b2a4" stroke-width="0.7" opacity="0.41"/><path d="M1281.5 400.6 L1283.4 392.1 L1282.2 384.3" stroke="#6e5a4c" stroke-width="1.1" opacity="0.39"/><path d="M1186.8 422.0 L1179.5 419.5 L1175.6 416.0 L1171.3 414.4" stroke="#5e4c40" stroke-width="1.3" opacity="0.30"/><path d="M1363.0 338.7 L1362.9 331.4 L1363.0 323.8 L1360.7 316.5" stroke="#6e5a4c" stroke-width="1.1" opacity="0.59"/><path d="M1334.1 330.1 L1339.5 327.1 L1346.9 327.3 L1354.7 326.0" stroke="#7a6555" stroke-width="1.4" opacity="0.45"/><path d="M1443.7 347.2 L1441.3 343.1 L1441.0 333.8" stroke="#7a6555" stroke-width="1.2" opacity="0.43"/><path d="M1370.5 343.1 L1374.1 335.3 L1377.1 331.7 L1382.0 324.3" stroke="#c0b2a4" stroke-width="1.0" opacity="0.35"/><path d="M1303.8 284.9 L1301.2 280.3 L1298.7 275.7" stroke="#5e4c40" stroke-width="0.8" opacity="0.56"/><path d="M1157.7 431.7 L1162.2 431.1 L1172.3 435.0 L1178.9 435.4" stroke="#6e5a4c" stroke-width="1.1" opacity="0.59"/><path d="M1319.1 300.7 L1314.8 295.9 L1313.6 287.9 L1311.6 282.6" stroke="#8a7564" stroke-width="0.8" opacity="0.37"/><path d="M1282.4 300.0 L1285.7 293.5 L1293.1 289.5 L1298.1 287.8" stroke="#c0b2a4" stroke-width="1.1" opacity="0.40"/><path d="M1229.6 368.9 L1229.9 360.7 L1234.3 355.7 L1238.3 350.2" stroke="#7a6555" stroke-width="1.1" opacity="0.46"/><path d="M1318.0 425.1 L1318.7 418.7 L1323.2 412.4" stroke="#5e4c40" stroke-width="1.4" opacity="0.54"/><path d="M1289.3 428.0 L1286.4 422.0 L1283.6 412.6" stroke="#c0b2a4" stroke-width="1.3" opacity="0.48"/><path d="M1419.1 359.6 L1417.0 353.4 L1414.2 347.1 L1409.9 343.6" stroke="#8a7564" stroke-width="0.9" opacity="0.48"/><path d="M1182.5 257.2 L1174.4 253.5 L1166.9 248.9 L1163.9 240.2" stroke="#5e4c40" stroke-width="0.9" opacity="0.44"/><path d="M1212.7 348.6 L1203.6 344.5 L1199.4 345.5" stroke="#5e4c40" stroke-width="1.3" opacity="0.48"/><path d="M1250.7 309.5 L1256.7 305.6 L1265.5 304.6" stroke="#d2c6bb" stroke-width="0.9" opacity="0.53"/><path d="M1186.0 230.4 L1183.4 222.4 L1181.5 218.8" stroke="#c0b2a4" stroke-width="1.4" opacity="0.44"/><path d="M1378.1 316.7 L1379.1 309.9 L1379.3 303.6" stroke="#6e5a4c" stroke-width="1.1" opacity="0.41"/><path d="M1269.1 383.1 L1264.9 378.7 L1260.6 372.9 L1250.8 370.3" stroke="#5e4c40" stroke-width="1.1" opacity="0.43"/><path d="M1353.6 300.8 L1359.3 296.0 L1365.9 289.4" stroke="#d2c6bb" stroke-width="1.0" opacity="0.52"/><path d="M1201.1 349.2 L1195.6 340.9 L1193.2 336.6" stroke="#5e4c40" stroke-width="1.0" opacity="0.30"/><path d="M1368.1 357.1 L1363.7 356.7 L1355.2 352.6 L1350.1 350.0" stroke="#d2c6bb" stroke-width="1.1" opacity="0.46"/><path d="M1209.4 216.1 L1205.5 210.0 L1202.7 202.6 L1203.5 195.8" stroke="#d2c6bb" stroke-width="1.0" opacity="0.36"/><path d="M1180.1 404.7 L1183.3 397.2 L1186.6 392.2" stroke="#7a6555" stroke-width="1.1" opacity="0.48"/><path d="M1280.1 256.7 L1273.3 249.1 L1268.9 244.8" stroke="#8a7564" stroke-width="1.1" opacity="0.57"/><path d="M1162.1 331.2 L1167.8 326.8 L1173.1 320.1 L1178.2 311.7" stroke="#d2c6bb" stroke-width="1.3" opacity="0.43"/><path d="M1237.2 392.0 L1241.3 389.9 L1245.7 388.9" stroke="#6e5a4c" stroke-width="1.2" opacity="0.35"/><path d="M1341.5 324.0 L1349.5 317.5 L1353.9 309.3" stroke="#5e4c40" stroke-width="1.3" opacity="0.39"/><path d="M1230.1 213.9 L1230.5 206.5 L1231.2 202.1 L1233.2 191.7" stroke="#c0b2a4" stroke-width="1.1" opacity="0.48"/><path d="M1432.1 361.0 L1424.8 360.6 L1415.7 358.5 L1406.2 355.6" stroke="#5e4c40" stroke-width="1.1" opacity="0.37"/><path d="M1168.4 330.7 L1166.7 325.7 L1163.3 317.9 L1163.8 309.0" stroke="#7a6555" stroke-width="1.1" opacity="0.50"/><path d="M1238.7 413.0 L1236.4 408.2 L1230.5 404.7" stroke="#6e5a4c" stroke-width="0.8" opacity="0.42"/><path d="M1265.4 279.3 L1264.9 274.3 L1266.7 268.5" stroke="#5e4c40" stroke-width="1.2" opacity="0.43"/><path d="M1437.6 408.4 L1447.1 404.1 L1453.7 402.0 L1457.6 399.9" stroke="#5e4c40" stroke-width="1.0" opacity="0.41"/><path d="M1436.1 315.7 L1443.1 313.3 L1448.8 307.1" stroke="#c0b2a4" stroke-width="0.9" opacity="0.51"/><path d="M1200.9 336.7 L1203.0 331.2 L1204.7 320.6" stroke="#7a6555" stroke-width="0.7" opacity="0.52"/><path d="M1346.0 415.9 L1354.8 411.7 L1364.4 409.1 L1372.0 405.5" stroke="#7a6555" stroke-width="0.8" opacity="0.39"/><path d="M1307.6 379.6 L1299.7 372.7 L1295.3 366.4" stroke="#7a6555" stroke-width="0.9" opacity="0.54"/><path d="M1302.3 324.0 L1295.2 318.9 L1293.6 313.8" stroke="#c0b2a4" stroke-width="1.0" opacity="0.46"/><path d="M1200.7 217.6 L1210.8 213.3 L1219.7 211.0 L1225.2 206.2" stroke="#c0b2a4" stroke-width="1.0" opacity="0.60"/><path d="M1320.8 388.7 L1321.6 382.8 L1320.5 375.2 L1315.4 370.7" stroke="#6e5a4c" stroke-width="1.2" opacity="0.42"/><path d="M1381.9 271.8 L1389.7 271.4 L1394.4 270.8" stroke="#d2c6bb" stroke-width="1.1" opacity="0.33"/><path d="M1417.0 306.5 L1417.6 299.1 L1421.2 289.9 L1425.9 282.1" stroke="#8a7564" stroke-width="1.4" opacity="0.53"/><path d="M1251.6 321.8 L1254.3 315.7 L1258.7 310.1 L1263.6 308.4" stroke="#c0b2a4" stroke-width="1.2" opacity="0.56"/><path d="M1302.5 363.9 L1294.5 357.2 L1288.9 352.3" stroke="#8a7564" stroke-width="1.3" opacity="0.39"/><path d="M1419.6 318.3 L1425.2 311.9 L1428.1 301.6 L1429.7 294.2" stroke="#7a6555" stroke-width="1.0" opacity="0.45"/><path d="M1407.8 275.1 L1413.3 268.4 L1419.1 259.4" stroke="#8a7564" stroke-width="0.8" opacity="0.34"/><path d="M1312.9 428.4 L1315.2 418.0 L1317.3 413.9 L1317.4 409.5" stroke="#5e4c40" stroke-width="0.8" opacity="0.54"/><path d="M1335.7 350.9 L1328.3 345.6 L1320.8 341.9 L1317.1 338.7" stroke="#c0b2a4" stroke-width="0.9" opacity="0.32"/><path d="M1397.9 399.7 L1401.1 393.8 L1409.9 389.4" stroke="#6e5a4c" stroke-width="1.2" opacity="0.41"/><path d="M1220.5 303.9 L1218.8 294.0 L1217.9 283.7 L1219.1 279.3" stroke="#c0b2a4" stroke-width="1.1" opacity="0.55"/><path d="M1285.2 311.0 L1279.1 307.2 L1271.6 301.3 L1261.7 297.7" stroke="#8a7564" stroke-width="1.3" opacity="0.40"/><path d="M1164.3 342.5 L1167.0 338.1 L1168.1 331.1" stroke="#5e4c40" stroke-width="1.4" opacity="0.57"/><path d="M1239.5 219.6 L1244.3 211.4 L1247.0 206.0" stroke="#5e4c40" stroke-width="1.0" opacity="0.56"/><path d="M1338.3 285.1 L1338.3 280.9 L1338.9 272.7" stroke="#6e5a4c" stroke-width="1.0" opacity="0.43"/><path d="M1181.0 230.5 L1181.8 224.7 L1189.7 217.1 L1193.2 213.1" stroke="#5e4c40" stroke-width="1.2" opacity="0.36"/><path d="M1327.8 374.5 L1332.9 366.5 L1336.9 362.2 L1338.4 357.5" stroke="#6e5a4c" stroke-width="1.2" opacity="0.59"/><path d="M1375.9 325.8 L1379.7 320.7 L1380.1 316.3 L1378.2 306.4" stroke="#6e5a4c" stroke-width="1.0" opacity="0.39"/><path d="M1317.3 250.2 L1319.0 244.3 L1323.7 240.6" stroke="#5e4c40" stroke-width="0.8" opacity="0.49"/><path d="M1337.8 374.4 L1343.0 365.2 L1342.6 357.5" stroke="#6e5a4c" stroke-width="1.1" opacity="0.53"/><path d="M1339.3 334.2 L1332.7 329.5 L1328.6 324.1" stroke="#d2c6bb" stroke-width="0.7" opacity="0.53"/><path d="M1190.6 224.5 L1195.9 222.3 L1199.4 218.1" stroke="#7a6555" stroke-width="1.1" opacity="0.58"/><path d="M1159.6 313.6 L1162.4 307.3 L1168.3 298.5" stroke="#7a6555" stroke-width="1.0" opacity="0.34"/><path d="M1368.0 284.5 L1365.1 277.5 L1363.7 272.2 L1363.8 266.0" stroke="#6e5a4c" stroke-width="1.0" opacity="0.48"/><path d="M1197.6 294.7 L1202.2 295.6 L1207.7 295.9" stroke="#6e5a4c" stroke-width="1.1" opacity="0.35"/><path d="M1332.7 314.6 L1337.2 307.4 L1340.8 303.2 L1341.1 297.5" stroke="#c0b2a4" stroke-width="0.8" opacity="0.39"/><path d="M1358.7 430.8 L1361.5 423.5 L1360.4 417.9 L1359.9 413.6" stroke="#6e5a4c" stroke-width="1.2" opacity="0.34"/><path d="M1236.7 307.0 L1236.2 300.1 L1237.8 295.0" stroke="#7a6555" stroke-width="1.0" opacity="0.30"/><path d="M1332.2 275.6 L1338.0 267.2 L1341.7 258.3 L1348.3 251.8" stroke="#5e4c40" stroke-width="0.8" opacity="0.34"/><path d="M1389.2 392.8 L1384.8 385.0 L1384.3 377.5 L1388.2 370.3" stroke="#c0b2a4" stroke-width="1.0" opacity="0.44"/><path d="M1159.1 312.6 L1166.8 312.4 L1172.2 309.6 L1177.8 304.6" stroke="#c0b2a4" stroke-width="1.0" opacity="0.45"/><path d="M1248.3 242.0 L1254.2 235.4 L1258.2 232.8 L1262.6 222.9" stroke="#d2c6bb" stroke-width="1.0" opacity="0.55"/><path d="M1202.7 348.8 L1202.2 343.0 L1206.0 336.7 L1215.8 333.2" stroke="#6e5a4c" stroke-width="0.9" opacity="0.55"/><path d="M1296.3 410.8 L1296.1 406.4 L1292.9 402.6" stroke="#8a7564" stroke-width="0.9" opacity="0.39"/><path d="M1417.7 387.6 L1425.7 381.7 L1430.5 378.3" stroke="#5e4c40" stroke-width="0.9" opacity="0.59"/><path d="M1238.6 361.1 L1237.2 356.2 L1238.6 347.5 L1239.5 342.7" stroke="#5e4c40" stroke-width="1.0" opacity="0.46"/><path d="M1408.3 383.5 L1413.0 381.6 L1420.0 378.9 L1429.3 381.1" stroke="#7a6555" stroke-width="1.1" opacity="0.60"/><path d="M1166.5 256.6 L1159.3 252.7 L1154.7 248.5" stroke="#6e5a4c" stroke-width="0.7" opacity="0.35"/><path d="M1423.8 336.2 L1430.3 330.7 L1438.7 329.7" stroke="#7a6555" stroke-width="1.1" opacity="0.51"/><path d="M1210.4 378.2 L1214.5 368.4 L1213.3 361.4" stroke="#d2c6bb" stroke-width="1.4" opacity="0.30"/><path d="M1400.4 353.2 L1397.8 349.1 L1391.3 345.9" stroke="#c0b2a4" stroke-width="1.2" opacity="0.34"/><path d="M1237.5 306.7 L1237.0 300.4 L1238.3 295.1 L1237.4 288.6" stroke="#7a6555" stroke-width="0.9" opacity="0.44"/><path d="M1341.2 346.0 L1334.4 341.8 L1329.9 336.6" stroke="#6e5a4c" stroke-width="1.2" opacity="0.36"/><path d="M1164.1 281.5 L1160.9 276.8 L1160.2 271.6" stroke="#c0b2a4" stroke-width="1.3" opacity="0.30"/><path d="M1319.9 290.0 L1315.8 289.5 L1309.4 289.3" stroke="#6e5a4c" stroke-width="0.9" opacity="0.48"/><path d="M1160.1 335.1 L1161.5 330.1 L1162.5 325.4" stroke="#7a6555" stroke-width="1.2" opacity="0.33"/><path d="M1192.2 275.3 L1202.8 272.8 L1209.7 268.0" stroke="#6e5a4c" stroke-width="1.0" opacity="0.33"/><path d="M1236.4 242.4 L1235.0 238.3 L1236.0 233.8" stroke="#c0b2a4" stroke-width="1.4" opacity="0.54"/><path d="M1370.0 356.9 L1365.4 352.7 L1358.1 351.4 L1348.8 346.8" stroke="#6e5a4c" stroke-width="1.0" opacity="0.56"/><path d="M1206.6 282.8 L1204.4 273.5 L1201.3 265.0" stroke="#8a7564" stroke-width="0.8" opacity="0.59"/><path d="M1377.1 405.9 L1383.4 402.8 L1387.3 399.9 L1394.9 397.7" stroke="#8a7564" stroke-width="1.0" opacity="0.56"/><path d="M1355.7 325.7 L1358.0 318.3 L1365.2 311.8 L1370.1 310.8" stroke="#5e4c40" stroke-width="1.0" opacity="0.43"/><path d="M1426.2 337.0 L1433.7 330.8 L1436.7 320.6 L1441.0 313.9" stroke="#7a6555" stroke-width="0.8" opacity="0.33"/><path d="M1242.1 262.4 L1251.7 257.7 L1255.8 255.2 L1262.4 253.9" stroke="#5e4c40" stroke-width="1.1" opacity="0.57"/><path d="M1212.1 296.7 L1208.8 288.5 L1203.2 282.8 L1194.0 277.3" stroke="#8a7564" stroke-width="1.2" opacity="0.33"/><path d="M1273.8 315.9 L1267.4 314.3 L1263.0 313.0" stroke="#5e4c40" stroke-width="0.9" opacity="0.32"/><path d="M1192.8 416.6 L1193.2 407.8 L1193.5 400.3" stroke="#8a7564" stroke-width="0.9" opacity="0.47"/><path d="M1361.3 308.2 L1365.3 306.0 L1372.8 306.0 L1377.6 302.5" stroke="#5e4c40" stroke-width="1.2" opacity="0.37"/><path d="M1364.8 324.7 L1361.1 317.7 L1354.5 314.7" stroke="#d2c6bb" stroke-width="1.4" opacity="0.57"/><path d="M1395.8 331.1 L1400.4 332.2 L1409.1 333.8" stroke="#5e4c40" stroke-width="1.1" opacity="0.56"/><path d="M1266.1 430.8 L1272.7 425.6 L1275.6 422.0 L1279.8 418.3" stroke="#c0b2a4" stroke-width="1.0" opacity="0.38"/><path d="M1201.7 384.4 L1200.7 374.0 L1196.2 365.0" stroke="#5e4c40" stroke-width="1.1" opacity="0.50"/><path d="M1164.4 285.4 L1174.7 282.6 L1183.5 284.3 L1188.3 285.5" stroke="#5e4c40" stroke-width="1.0" opacity="0.38"/><path d="M1240.2 253.9 L1246.6 250.2 L1254.0 251.4" stroke="#d2c6bb" stroke-width="1.2" opacity="0.52"/><path d="M1215.7 321.0 L1206.4 317.8 L1202.9 315.2" stroke="#6e5a4c" stroke-width="0.9" opacity="0.32"/><path d="M1191.1 425.1 L1195.2 418.4 L1199.6 414.7" stroke="#8a7564" stroke-width="1.2" opacity="0.59"/><path d="M1423.5 400.1 L1425.7 390.1 L1431.2 382.5 L1435.6 374.8" stroke="#d2c6bb" stroke-width="1.4" opacity="0.43"/><path d="M1166.8 253.1 L1173.1 249.2 L1178.5 241.6 L1186.6 237.9" stroke="#6e5a4c" stroke-width="1.0" opacity="0.33"/><path d="M1182.6 223.9 L1178.9 220.0 L1177.6 215.3 L1177.6 211.0" stroke="#5e4c40" stroke-width="1.3" opacity="0.47"/><path d="M1372.5 299.5 L1367.4 291.9 L1364.9 284.7 L1366.1 274.8" stroke="#7a6555" stroke-width="1.4" opacity="0.58"/><path d="M1371.8 258.2 L1366.9 256.6 L1359.4 252.5 L1356.9 248.0" stroke="#7a6555" stroke-width="1.0" opacity="0.49"/><path d="M1161.8 301.2 L1162.0 290.8 L1159.7 284.3 L1154.1 276.1" stroke="#d2c6bb" stroke-width="0.7" opacity="0.57"/><path d="M1161.5 371.5 L1168.2 370.1 L1178.4 368.7 L1185.4 370.9" stroke="#5e4c40" stroke-width="0.7" opacity="0.35"/><path d="M1222.5 393.5 L1215.2 394.5 L1208.7 399.7" stroke="#7a6555" stroke-width="0.9" opacity="0.52"/><path d="M1259.3 381.6 L1261.9 377.7 L1264.1 369.3" stroke="#8a7564" stroke-width="1.2" opacity="0.42"/><path d="M1306.1 396.1 L1304.7 389.2 L1306.3 384.0" stroke="#d2c6bb" stroke-width="1.3" opacity="0.59"/><path d="M1358.0 287.4 L1360.2 277.7 L1362.8 270.3" stroke="#7a6555" stroke-width="1.3" opacity="0.31"/><path d="M1318.7 428.1 L1316.8 417.5 L1315.0 407.7 L1313.3 403.1" stroke="#6e5a4c" stroke-width="1.0" opacity="0.31"/><path d="M1378.8 295.0 L1375.0 291.6 L1368.6 285.6" stroke="#8a7564" stroke-width="1.3" opacity="0.58"/><path d="M1301.7 259.4 L1294.2 259.5 L1286.2 260.0" stroke="#d2c6bb" stroke-width="1.4" opacity="0.52"/><path d="M1334.5 320.3 L1329.7 317.9 L1321.7 316.9 L1311.8 315.0" stroke="#d2c6bb" stroke-width="0.7" opacity="0.44"/><path d="M1249.3 336.3 L1252.5 326.2 L1256.5 321.0 L1259.1 313.5" stroke="#7a6555" stroke-width="0.9" opacity="0.43"/><path d="M1332.8 293.3 L1338.0 284.3 L1339.6 278.2 L1343.9 275.1" stroke="#d2c6bb" stroke-width="0.9" opacity="0.47"/><path d="M1256.0 382.1 L1261.5 378.5 L1268.1 376.5 L1275.6 375.5" stroke="#5e4c40" stroke-width="1.3" opacity="0.44"/><path d="M1267.9 369.4 L1273.2 363.8 L1274.5 357.0" stroke="#d2c6bb" stroke-width="0.9" opacity="0.38"/><path d="M1237.0 334.1 L1245.2 331.7 L1251.5 329.3" stroke="#c0b2a4" stroke-width="0.8" opacity="0.30"/><path d="M1369.2 353.4 L1369.2 344.7 L1365.8 339.7" stroke="#d2c6bb" stroke-width="0.9" opacity="0.59"/><path d="M1207.4 312.1 L1216.3 312.2 L1223.4 313.6 L1227.9 311.8" stroke="#8a7564" stroke-width="0.7" opacity="0.32"/><path d="M1390.2 346.3 L1388.1 339.1 L1389.1 332.7 L1386.7 325.3" stroke="#8a7564" stroke-width="0.8" opacity="0.58"/><path d="M1283.8 337.1 L1282.2 332.6 L1280.9 328.4 L1283.0 322.5" stroke="#8a7564" stroke-width="1.1" opacity="0.53"/><path d="M1400.1 315.6 L1397.7 312.1 L1394.2 306.5" stroke="#8a7564" stroke-width="0.8" opacity="0.30"/><path d="M1192.0 225.1 L1197.0 220.7 L1200.9 211.1" stroke="#c0b2a4" stroke-width="1.3" opacity="0.39"/><path d="M1314.1 344.4 L1312.8 339.1 L1310.6 331.3 L1312.6 321.0" stroke="#8a7564" stroke-width="0.7" opacity="0.38"/><path d="M1325.4 307.2 L1322.8 303.6 L1321.4 294.9 L1323.9 287.8" stroke="#7a6555" stroke-width="1.0" opacity="0.51"/><path d="M1415.9 400.1 L1420.9 397.3 L1426.8 398.0" stroke="#d2c6bb" stroke-width="1.3" opacity="0.43"/><path d="M1185.5 377.0 L1181.2 372.4 L1179.4 363.5 L1175.5 359.2" stroke="#d2c6bb" stroke-width="1.4" opacity="0.38"/><path d="M1241.3 322.8 L1234.3 320.7 L1229.5 319.5" stroke="#7a6555" stroke-width="0.9" opacity="0.31"/><path d="M1186.9 257.0 L1192.8 254.3 L1196.4 250.6" stroke="#d2c6bb" stroke-width="1.2" opacity="0.39"/><path d="M1345.2 331.6 L1349.6 324.0 L1352.7 319.5 L1351.9 308.9" stroke="#5e4c40" stroke-width="0.9" opacity="0.53"/><path d="M1443.3 358.1 L1433.3 356.2 L1429.4 354.8" stroke="#7a6555" stroke-width="1.1" opacity="0.45"/><path d="M1273.5 334.3 L1280.8 327.6 L1288.4 320.8 L1292.9 319.2" stroke="#c0b2a4" stroke-width="1.1" opacity="0.32"/><path d="M1306.5 301.3 L1306.7 296.4 L1303.2 287.1 L1304.5 280.2" stroke="#d2c6bb" stroke-width="0.9" opacity="0.47"/><path d="M1170.5 363.4 L1173.4 356.8 L1174.1 349.7 L1173.7 345.2" stroke="#6e5a4c" stroke-width="1.3" opacity="0.42"/><path d="M1327.3 270.6 L1328.8 264.8 L1331.0 257.7 L1334.8 253.6" stroke="#7a6555" stroke-width="1.2" opacity="0.38"/><path d="M1341.8 285.4 L1340.3 277.9 L1336.3 274.0 L1328.6 272.5" stroke="#7a6555" stroke-width="1.3" opacity="0.44"/><path d="M1405.8 419.2 L1404.5 410.7 L1404.5 401.1 L1403.5 391.6" stroke="#c0b2a4" stroke-width="0.7" opacity="0.31"/><path d="M1367.7 437.0 L1358.8 434.2 L1349.2 432.6" stroke="#7a6555" stroke-width="1.1" opacity="0.52"/><path d="M1372.8 302.2 L1378.1 301.8 L1383.7 296.4" stroke="#8a7564" stroke-width="1.4" opacity="0.52"/><path d="M1183.8 343.5 L1187.8 335.9 L1187.3 328.0" stroke="#7a6555" stroke-width="1.2" opacity="0.54"/><path d="M1386.6 402.9 L1384.9 395.0 L1380.4 389.0" stroke="#5e4c40" stroke-width="1.3" opacity="0.55"/><path d="M1207.5 329.6 L1204.3 325.5 L1200.4 318.7" stroke="#5e4c40" stroke-width="1.4" opacity="0.59"/><path d="M1347.6 311.1 L1344.7 306.5 L1338.0 298.9" stroke="#d2c6bb" stroke-width="1.2" opacity="0.42"/><path d="M1314.9 271.8 L1322.5 265.1 L1326.0 259.1 L1332.3 251.1" stroke="#8a7564" stroke-width="0.7" opacity="0.43"/><path d="M1265.7 409.1 L1262.8 405.4 L1257.3 401.9 L1249.5 399.1" stroke="#6e5a4c" stroke-width="1.2" opacity="0.56"/><path d="M1303.3 359.3 L1294.6 355.9 L1287.0 355.4 L1281.5 351.3" stroke="#5e4c40" stroke-width="0.8" opacity="0.38"/><path d="M1365.8 266.8 L1369.9 261.3 L1371.5 251.8 L1376.9 246.6" stroke="#d2c6bb" stroke-width="1.2" opacity="0.51"/><path d="M1292.9 377.5 L1283.4 374.3 L1275.8 369.1" stroke="#d2c6bb" stroke-width="0.7" opacity="0.40"/><path d="M1274.5 338.9 L1278.0 329.7 L1279.5 319.8" stroke="#5e4c40" stroke-width="1.1" opacity="0.47"/><path d="M1346.0 368.2 L1354.7 365.7 L1363.1 368.2" stroke="#7a6555" stroke-width="0.8" opacity="0.35"/><path d="M1430.3 392.0 L1434.3 385.6 L1440.6 379.9" stroke="#7a6555" stroke-width="1.1" opacity="0.32"/><path d="M1259.9 396.7 L1257.1 393.4 L1251.3 390.2" stroke="#5e4c40" stroke-width="1.3" opacity="0.31"/><path d="M1383.2 408.9 L1388.0 408.4 L1393.0 409.7" stroke="#5e4c40" stroke-width="1.1" opacity="0.54"/><path d="M1231.4 318.3 L1232.9 314.3 L1237.0 309.7" stroke="#5e4c40" stroke-width="1.4" opacity="0.35"/><path d="M1217.1 288.5 L1213.1 279.1 L1211.6 273.9" stroke="#5e4c40" stroke-width="1.2" opacity="0.53"/><path d="M1189.8 359.1 L1183.5 357.4 L1175.0 357.6 L1167.7 355.8" stroke="#5e4c40" stroke-width="1.1" opacity="0.50"/><path d="M1374.4 391.1 L1381.0 388.0 L1388.0 389.4" stroke="#5e4c40" stroke-width="1.3" opacity="0.59"/><path d="M1302.8 284.0 L1307.2 275.9 L1314.0 272.0" stroke="#c0b2a4" stroke-width="1.4" opacity="0.32"/><path d="M1252.1 270.5 L1249.4 264.4 L1243.5 260.9" stroke="#7a6555" stroke-width="0.7" opacity="0.50"/><path d="M1264.0 303.0 L1263.3 295.7 L1267.7 287.6 L1275.4 284.2" stroke="#7a6555" stroke-width="1.1" opacity="0.46"/><path d="M1355.7 287.1 L1345.4 288.5 L1341.2 291.6 L1334.7 297.6" stroke="#8a7564" stroke-width="0.8" opacity="0.39"/><path d="M1222.8 345.8 L1222.3 338.3 L1219.7 334.9 L1215.3 332.7" stroke="#5e4c40" stroke-width="1.2" opacity="0.36"/><path d="M1289.5 260.5 L1284.9 257.9 L1281.2 255.8" stroke="#d2c6bb" stroke-width="1.0" opacity="0.45"/><path d="M1230.2 380.5 L1239.1 379.9 L1248.2 385.7" stroke="#d2c6bb" stroke-width="1.2" opacity="0.54"/><path d="M1212.1 246.8 L1219.8 245.6 L1225.0 242.3 L1232.8 239.2" stroke="#6e5a4c" stroke-width="1.3" opacity="0.38"/><path d="M1385.4 290.4 L1383.3 281.6 L1377.7 274.9 L1376.0 269.5" stroke="#7a6555" stroke-width="1.2" opacity="0.58"/><path d="M1270.5 388.3 L1279.8 382.6 L1282.4 375.6" stroke="#5e4c40" stroke-width="1.0" opacity="0.44"/><path d="M1167.1 270.5 L1175.3 270.3 L1181.9 271.2 L1190.3 278.1" stroke="#c0b2a4" stroke-width="1.1" opacity="0.38"/><path d="M1184.4 216.6 L1187.1 213.4 L1189.7 205.4" stroke="#7a6555" stroke-width="0.7" opacity="0.46"/><path d="M1322.1 244.7 L1324.9 240.9 L1334.5 237.6" stroke="#8a7564" stroke-width="1.1" opacity="0.31"/><path d="M1174.5 396.8 L1182.6 393.6 L1185.8 389.2 L1193.2 381.8" stroke="#5e4c40" stroke-width="0.8" opacity="0.36"/><path d="M1353.1 283.4 L1360.5 282.3 L1368.3 280.6" stroke="#7a6555" stroke-width="1.0" opacity="0.60"/><path d="M1332.4 346.0 L1342.1 346.3 L1349.3 346.8 L1352.5 349.4" stroke="#5e4c40" stroke-width="1.0" opacity="0.58"/><path d="M1373.3 357.9 L1367.7 359.0 L1362.5 359.9 L1354.5 357.2" stroke="#5e4c40" stroke-width="1.3" opacity="0.41"/><path d="M1266.3 434.2 L1265.6 425.4 L1264.9 420.2 L1260.8 413.8" stroke="#c0b2a4" stroke-width="1.1" opacity="0.30"/><path d="M1357.8 400.5 L1367.6 398.4 L1376.4 392.2 L1381.3 390.5" stroke="#6e5a4c" stroke-width="1.4" opacity="0.47"/><path d="M1357.5 258.3 L1361.7 252.0 L1361.1 244.9" stroke="#7a6555" stroke-width="1.3" opacity="0.36"/><path d="M1234.2 221.8 L1241.9 214.0 L1249.3 206.7" stroke="#6e5a4c" stroke-width="1.0" opacity="0.37"/><path d="M1197.3 299.1 L1194.4 290.8 L1189.7 287.7 L1180.7 284.8" stroke="#5e4c40" stroke-width="0.9" opacity="0.32"/><path d="M1370.7 258.5 L1371.0 254.4 L1371.6 244.5" stroke="#7a6555" stroke-width="0.9" opacity="0.48"/><path d="M1351.0 292.7 L1342.6 289.7 L1338.5 289.9 L1331.3 285.1" stroke="#6e5a4c" stroke-width="1.3" opacity="0.50"/><path d="M1239.1 390.9 L1243.8 384.6 L1250.3 378.7 L1260.1 373.9" stroke="#5e4c40" stroke-width="1.3" opacity="0.53"/><path d="M1343.5 352.9 L1351.2 348.1 L1355.2 348.7" stroke="#6e5a4c" stroke-width="1.2" opacity="0.56"/><path d="M1251.9 250.5 L1241.5 247.0 L1235.9 248.5" stroke="#7a6555" stroke-width="1.2" opacity="0.34"/><path d="M1181.1 210.4 L1180.6 200.8 L1175.5 194.1 L1174.5 189.3" stroke="#7a6555" stroke-width="0.9" opacity="0.35"/><path d="M1254.8 292.2 L1256.1 288.0 L1259.6 282.5 L1263.2 278.8" stroke="#5e4c40" stroke-width="1.3" opacity="0.52"/><path d="M1279.5 397.4 L1283.3 394.7 L1288.6 386.0" stroke="#c0b2a4" stroke-width="1.1" opacity="0.47"/><path d="M1369.0 412.5 L1365.3 410.3 L1361.3 405.5 L1351.6 400.2" stroke="#c0b2a4" stroke-width="0.9" opacity="0.30"/><path d="M1229.3 268.3 L1230.1 260.5 L1228.5 256.3 L1223.7 250.8" stroke="#6e5a4c" stroke-width="1.2" opacity="0.35"/><path d="M1407.0 395.0 L1408.1 389.9 L1404.9 383.9" stroke="#8a7564" stroke-width="0.7" opacity="0.30"/><path d="M1317.6 307.7 L1321.1 304.3 L1326.1 299.1" stroke="#7a6555" stroke-width="1.2" opacity="0.47"/><path d="M1365.7 400.3 L1368.5 396.8 L1372.4 390.9" stroke="#7a6555" stroke-width="1.0" opacity="0.51"/><path d="M1268.4 273.2 L1264.3 267.1 L1260.0 259.2 L1252.1 255.2" stroke="#5e4c40" stroke-width="0.8" opacity="0.54"/><path d="M1213.3 412.4 L1214.9 404.8 L1218.2 398.6" stroke="#5e4c40" stroke-width="0.8" opacity="0.48"/><path d="M1299.1 267.1 L1305.3 259.8 L1312.3 254.9 L1315.8 247.7" stroke="#6e5a4c" stroke-width="1.0" opacity="0.38"/><path d="M1258.5 320.7 L1250.4 316.2 L1245.9 314.6" stroke="#6e5a4c" stroke-width="1.3" opacity="0.56"/><path d="M1414.2 305.4 L1410.3 302.5 L1406.5 293.6" stroke="#6e5a4c" stroke-width="1.3" opacity="0.36"/><path d="M1397.8 365.3 L1401.0 361.8 L1405.4 359.7 L1410.3 353.1" stroke="#8a7564" stroke-width="0.8" opacity="0.51"/><path d="M1292.5 256.4 L1283.8 256.9 L1276.6 255.4 L1269.3 249.9" stroke="#7a6555" stroke-width="1.1" opacity="0.57"/><path d="M1247.0 275.4 L1242.5 271.2 L1235.9 266.9 L1231.9 262.2" stroke="#5e4c40" stroke-width="1.3" opacity="0.39"/><path d="M1160.4 405.4 L1162.5 401.5 L1167.2 395.7 L1167.5 391.1" stroke="#5e4c40" stroke-width="0.7" opacity="0.42"/><path d="M1247.0 341.7 L1241.6 340.8 L1235.9 341.4 L1229.6 337.9" stroke="#5e4c40" stroke-width="1.2" opacity="0.34"/><path d="M1241.8 331.6 L1235.9 328.2 L1232.0 325.6" stroke="#7a6555" stroke-width="0.7" opacity="0.46"/><path d="M1193.0 388.9 L1194.9 378.3 L1190.7 370.1 L1187.1 366.9" stroke="#7a6555" stroke-width="0.9" opacity="0.30"/><path d="M1258.4 277.9 L1253.4 271.9 L1245.5 269.6" stroke="#8a7564" stroke-width="0.9" opacity="0.41"/><path d="M1274.2 366.8 L1270.4 362.1 L1269.8 354.6 L1271.8 350.7" stroke="#d2c6bb" stroke-width="0.8" opacity="0.49"/><path d="M1294.0 245.2 L1296.4 238.0 L1300.6 231.3" stroke="#d2c6bb" stroke-width="1.4" opacity="0.60"/><path d="M1218.8 291.8 L1220.9 286.1 L1219.3 279.4 L1222.3 272.6" stroke="#d2c6bb" stroke-width="1.1" opacity="0.48"/><path d="M1268.5 391.8 L1270.1 382.6 L1272.4 378.0" stroke="#6e5a4c" stroke-width="0.9" opacity="0.36"/><path d="M1350.0 298.2 L1349.5 290.5 L1352.2 283.1 L1353.8 278.3" stroke="#c0b2a4" stroke-width="0.9" opacity="0.43"/><path d="M1312.2 373.6 L1319.5 369.5 L1325.6 365.4 L1331.2 359.4" stroke="#8a7564" stroke-width="1.1" opacity="0.43"/><path d="M1304.9 368.0 L1306.9 359.4 L1304.6 349.7" stroke="#5e4c40" stroke-width="0.8" opacity="0.44"/><path d="M1374.5 304.4 L1382.3 298.7 L1388.0 294.8 L1397.0 294.9" stroke="#5e4c40" stroke-width="0.9" opacity="0.52"/><path d="M1225.6 429.8 L1230.3 419.9 L1235.5 417.4" stroke="#6e5a4c" stroke-width="0.8" opacity="0.55"/><path d="M1265.8 356.9 L1270.4 356.5 L1275.8 353.1 L1280.0 345.3" stroke="#d2c6bb" stroke-width="1.1" opacity="0.32"/><path d="M1317.9 256.3 L1315.4 247.2 L1311.2 242.6" stroke="#8a7564" stroke-width="1.1" opacity="0.50"/><path d="M1438.2 323.4 L1441.1 316.4 L1442.0 311.6 L1437.3 302.4" stroke="#c0b2a4" stroke-width="1.1" opacity="0.37"/><path d="M1239.7 224.1 L1246.8 221.1 L1252.0 218.5" stroke="#7a6555" stroke-width="1.3" opacity="0.36"/><path d="M1241.6 405.9 L1237.0 402.1 L1232.2 400.6 L1228.8 396.6" stroke="#6e5a4c" stroke-width="0.9" opacity="0.41"/><path d="M1230.6 368.4 L1234.2 360.2 L1239.2 354.0 L1240.0 346.2" stroke="#d2c6bb" stroke-width="1.3" opacity="0.32"/><path d="M1167.3 319.4 L1170.4 311.8 L1177.3 304.7 L1180.1 294.3" stroke="#8a7564" stroke-width="0.9" opacity="0.31"/><path d="M1271.1 305.5 L1265.4 298.7 L1262.7 293.5" stroke="#5e4c40" stroke-width="0.9" opacity="0.33"/><path d="M1350.5 376.9 L1353.4 371.6 L1357.9 366.9" stroke="#d2c6bb" stroke-width="1.4" opacity="0.55"/><path d="M1408.9 395.0 L1407.5 385.4 L1400.7 377.6" stroke="#7a6555" stroke-width="1.3" opacity="0.54"/><path d="M1365.9 313.9 L1361.8 308.7 L1360.6 299.1 L1359.4 294.7" stroke="#8a7564" stroke-width="0.8" opacity="0.48"/><path d="M1364.1 252.7 L1363.7 245.8 L1365.1 238.2 L1372.7 231.4" stroke="#c0b2a4" stroke-width="1.1" opacity="0.38"/><path d="M1335.9 346.6 L1337.1 342.2 L1340.0 335.3" stroke="#d2c6bb" stroke-width="1.2" opacity="0.38"/><path d="M1228.9 359.5 L1236.3 355.6 L1243.2 348.9" stroke="#8a7564" stroke-width="1.3" opacity="0.51"/><path d="M1158.3 236.9 L1164.1 230.3 L1170.9 228.7" stroke="#6e5a4c" stroke-width="1.0" opacity="0.53"/><path d="M1440.7 388.8 L1446.8 381.9 L1454.9 379.7 L1464.5 379.9" stroke="#6e5a4c" stroke-width="1.2" opacity="0.59"/><path d="M1423.9 389.8 L1418.6 381.9 L1415.7 377.9 L1406.6 372.7" stroke="#8a7564" stroke-width="0.9" opacity="0.48"/><path d="M1267.3 291.0 L1272.3 284.2 L1276.3 277.3 L1276.1 269.9" stroke="#5e4c40" stroke-width="0.7" opacity="0.53"/><path d="M1188.3 317.9 L1192.0 312.4 L1193.3 302.6" stroke="#8a7564" stroke-width="1.0" opacity="0.35"/><path d="M1229.7 423.1 L1235.7 417.9 L1240.7 415.2 L1249.4 412.3" stroke="#c0b2a4" stroke-width="1.3" opacity="0.39"/><path d="M1199.3 306.1 L1206.7 299.0 L1212.0 298.6 L1216.3 298.0" stroke="#5e4c40" stroke-width="1.1" opacity="0.31"/><path d="M1318.8 330.3 L1312.7 323.4 L1305.2 320.0 L1300.9 316.0" stroke="#7a6555" stroke-width="0.9" opacity="0.43"/><path d="M1417.9 388.3 L1416.8 383.7 L1418.6 379.5 L1419.7 373.8" stroke="#6e5a4c" stroke-width="1.0" opacity="0.53"/><path d="M1190.4 397.2 L1199.9 392.8 L1203.9 385.8 L1211.9 379.3" stroke="#7a6555" stroke-width="1.1" opacity="0.32"/><path d="M1373.2 393.7 L1377.5 391.2 L1381.9 385.4 L1384.3 381.5" stroke="#6e5a4c" stroke-width="1.1" opacity="0.50"/><path d="M1229.8 244.6 L1229.3 237.4 L1232.5 232.5 L1239.6 227.9" stroke="#5e4c40" stroke-width="1.1" opacity="0.52"/><path d="M1443.0 399.4 L1435.4 394.0 L1432.0 387.9 L1427.2 385.6" stroke="#d2c6bb" stroke-width="1.0" opacity="0.39"/><path d="M1410.7 426.5 L1407.3 418.9 L1405.8 408.7" stroke="#7a6555" stroke-width="1.4" opacity="0.44"/><path d="M1375.7 347.7 L1367.0 346.5 L1361.7 347.5 L1352.5 343.4" stroke="#d2c6bb" stroke-width="1.3" opacity="0.55"/><path d="M1224.3 406.9 L1228.8 401.4 L1233.4 397.3 L1237.7 396.4" stroke="#6e5a4c" stroke-width="1.3" opacity="0.38"/><path d="M1362.7 347.3 L1362.6 339.3 L1366.1 330.8" stroke="#7a6555" stroke-width="1.1" opacity="0.45"/><path d="M1377.4 367.4 L1385.0 364.4 L1392.4 357.3" stroke="#8a7564" stroke-width="1.2" opacity="0.36"/><path d="M1404.4 303.2 L1397.1 298.5 L1392.9 293.7 L1387.5 284.1" stroke="#c0b2a4" stroke-width="0.8" opacity="0.30"/><path d="M1412.4 300.7 L1413.3 295.2 L1419.1 290.3 L1424.1 280.7" stroke="#c0b2a4" stroke-width="1.0" opacity="0.58"/><path d="M1372.6 292.3 L1382.0 290.7 L1386.9 285.4 L1388.1 278.2" stroke="#6e5a4c" stroke-width="1.2" opacity="0.40"/><path d="M1230.5 402.1 L1233.3 398.4 L1237.0 389.8" stroke="#8a7564" stroke-width="1.2" opacity="0.54"/><path d="M1385.6 337.1 L1378.9 332.6 L1369.6 331.3 L1363.3 329.1" stroke="#6e5a4c" stroke-width="1.3" opacity="0.38"/><path d="M1277.9 324.4 L1274.0 318.0 L1271.0 313.3" stroke="#7a6555" stroke-width="1.3" opacity="0.45"/><path d="M1420.9 431.4 L1415.1 430.6 L1406.8 425.7 L1398.2 425.6" stroke="#c0b2a4" stroke-width="1.3" opacity="0.46"/><path d="M1314.9 306.0 L1311.6 298.1 L1310.7 293.6 L1309.6 289.4" stroke="#7a6555" stroke-width="0.9" opacity="0.54"/><path d="M1355.1 328.6 L1357.5 323.3 L1361.2 320.4 L1364.5 314.4" stroke="#8a7564" stroke-width="1.3" opacity="0.49"/><path d="M1244.1 382.7 L1243.3 375.7 L1240.7 371.9" stroke="#d2c6bb" stroke-width="1.1" opacity="0.40"/><path d="M1794.4 304.5 L1790.5 292.4 L1782.6 281.0" stroke="#6a5a50" stroke-width="0.9" opacity="0.4"/><path d="M1799.1 341.4 L1795.6 333.5 L1794.9 328.2" stroke="#6a5a50" stroke-width="0.9" opacity="0.4"/><path d="M1640.6 343.9 L1636.8 335.1 L1631.2 326.4 L1628.3 315.8" stroke="#6a5a50" stroke-width="0.9" opacity="0.4"/><path d="M1783.6 394.7 L1783.1 388.6 L1785.4 381.8 L1788.7 372.6" stroke="#6a5a50" stroke-width="0.9" opacity="0.4"/><path d="M1664.1 373.2 L1666.4 368.4 L1668.0 363.0 L1673.4 352.4" stroke="#6a5a50" stroke-width="0.9" opacity="0.4"/><path d="M1811.1 261.0 L1809.2 250.8 L1808.4 244.6 L1806.6 238.4" stroke="#6a5a50" stroke-width="0.9" opacity="0.4"/><path d="M1811.6 284.2 L1811.8 274.6 L1814.1 267.0 L1820.2 260.8" stroke="#6a5a50" stroke-width="0.9" opacity="0.4"/><path d="M1804.5 286.3 L1800.3 276.3 L1800.4 271.0 L1803.9 264.5" stroke="#6a5a50" stroke-width="0.9" opacity="0.4"/><path d="M1652.2 279.5 L1653.2 268.8 L1653.0 261.1" stroke="#6a5a50" stroke-width="0.9" opacity="0.4"/><path d="M1663.4 343.7 L1663.9 331.2 L1661.6 324.1" stroke="#6a5a50" stroke-width="0.9" opacity="0.4"/><path d="M1663.0 300.9 L1666.9 289.7 L1671.9 285.0" stroke="#6a5a50" stroke-width="0.9" opacity="0.4"/><path d="M1790.6 276.9 L1792.4 267.5 L1789.4 257.7" stroke="#6a5a50" stroke-width="0.9" opacity="0.4"/><path d="M1646.7 302.7 L1645.9 294.7 L1646.5 288.5" stroke="#6a5a50" stroke-width="0.9" opacity="0.4"/><path d="M1678.6 274.8 L1684.4 264.1 L1687.7 253.1" stroke="#6a5a50" stroke-width="0.9" opacity="0.4"/><path d="M1796.2 285.2 L1795.2 278.8 L1793.4 272.9" stroke="#6a5a50" stroke-width="0.9" opacity="0.4"/><path d="M1796.1 433.6 L1802.3 427.4 L1809.5 415.9 L1818.2 410.5" stroke="#6a5a50" stroke-width="0.9" opacity="0.4"/><path d="M1657.1 323.9 L1661.2 318.5 L1667.8 310.8" stroke="#6a5a50" stroke-width="0.9" opacity="0.4"/><path d="M1673.7 299.0 L1676.1 287.2 L1678.4 279.5 L1680.6 270.7" stroke="#6a5a50" stroke-width="0.9" opacity="0.4"/><path d="M1665.6 289.7 L1665.3 282.8 L1664.6 276.0 L1660.9 264.7" stroke="#6a5a50" stroke-width="0.9" opacity="0.4"/><path d="M1654.3 293.2 L1657.9 286.4 L1659.0 278.4 L1660.1 265.8" stroke="#6a5a50" stroke-width="0.9" opacity="0.4"/><path d="M1669.5 311.4 L1671.9 303.5 L1673.7 293.0" stroke="#6a5a50" stroke-width="0.9" opacity="0.4"/><path d="M1657.0 338.3 L1654.5 333.2 L1647.1 322.3 L1644.6 311.1" stroke="#6a5a50" stroke-width="0.9" opacity="0.4"/><path d="M1690.2 283.2 L1698.4 271.9 L1699.2 265.9 L1697.4 256.9" stroke="#6a5a50" stroke-width="0.9" opacity="0.4"/><path d="M1807.1 369.8 L1802.7 363.0 L1790.8 356.2" stroke="#6a5a50" stroke-width="0.9" opacity="0.4"/><path d="M1666.9 420.4 L1666.1 413.9 L1662.8 402.3" stroke="#6a5a50" stroke-width="0.9" opacity="0.4"/><path d="M1804.1 275.9 L1807.6 266.8 L1811.8 259.3" stroke="#6a5a50" stroke-width="0.9" opacity="0.4"/><path d="M1776.0 289.9 L1774.0 278.4 L1768.0 270.5" stroke="#6a5a50" stroke-width="0.9" opacity="0.4"/><path d="M1813.8 371.2 L1811.2 361.4 L1805.5 353.3 L1801.8 348.2" stroke="#6a5a50" stroke-width="0.9" opacity="0.4"/></g>
<g filter="url(#b1)">
 <path d="M1604 256 L1606 170 L1609 256z" fill="#d6d6d6"/>
 <!-- man B camo -->
 <path d="M1482 300 Q1498 292 1518 296 L1550 305 L1566 338 L1593 342 L1593 354 L1562 356 L1560 437 L1478 437 L1470 360z" fill="#3f372e"/>
 <path d="M1480 296 Q1498 290 1516 298 L1512 314 L1482 312z" fill="#8d8f8f"/>
 <ellipse cx="1517" cy="290" rx="13" ry="16" fill="#c49a84"/>
 <path d="M1494 278 Q1500 262 1520 266 L1526 274 L1508 278 L1500 296z" fill="#3a3026"/>
 <path d="M1530 340 L1570 337 L1572 354 L1532 362z" fill="#3b332b"/>
 <ellipse cx="1580" cy="347" rx="9" ry="7" fill="#d0a68e"/>
 <path d="M1514 405 L1548 405 L1546 437 L1514 437z" fill="#2a3a30"/>
 <!-- man C parka -->
 <path d="M1556 292 Q1574 280 1598 282 Q1626 288 1636 312 L1638 400 L1626 414 L1570 414 L1548 398 L1548 330z" fill="#393b2f"/>
 <path d="M1566 410 L1624 410 L1624 437 L1566 437z" fill="#2b2b2a"/>
 <ellipse cx="1596" cy="278" rx="12" ry="15" fill="#b48a72"/>
 <path d="M1584 286 Q1596 296 1606 286 L1607 293 L1583 293z" fill="#3b2c22"/>
 <path d="M1580 262 Q1594 246 1610 254 L1615 266 L1580 266z" fill="#141414"/>
 <rect x="1599" y="294" width="11" height="16" fill="#e6e2de"/>
 <ellipse cx="1598" cy="310" rx="10" ry="8" fill="#cfa189"/>
 <!-- man D -->
 <path d="M1636 272 L1648 264 L1706 300 L1734 314 L1760 306 L1776 322 L1781 360 L1781 428 L1673 428 L1676 340 L1696 330 L1638 284z" fill="#46473a"/>
 <ellipse cx="1628" cy="256" rx="17" ry="7" transform="rotate(35 1628 256)" fill="#d6b09b"/>
 <path d="M1628 246 L1636 238 L1640 241 L1634 252z" fill="#d6b09b"/>
 <path d="M1708 290 Q1745 284 1776 306 L1770 324 L1712 322z" fill="#8e8f8f"/>
 <ellipse cx="1727" cy="296" rx="14" ry="16" fill="#b58b73"/>
 <path d="M1716 276 Q1738 260 1758 278 L1756 302 L1720 290z" fill="#df5f2b"/>
 <!-- man A gray jacket -->
 <path d="M1426 437 L1436 385 L1472 368 L1501 360 L1510 346 L1535 351 L1554 394 L1556 437z" fill="#a9aea7"/>
 <path d="M1436 352 Q1462 346 1487 356 L1486 382 L1440 388z" fill="#1f2a3a"/>
 <ellipse cx="1482" cy="340" rx="14" ry="14" fill="#c49a82"/>
 <path d="M1440 345 Q1442 312 1470 311 Q1492 312 1496 322 L1482 328 L1460 340 L1450 352z" fill="#161618"/>
 <ellipse cx="1505" cy="336" rx="9" ry="11" fill="#cfa58c"/>
 <!-- person E -->
 <path d="M1693 350 Q1720 326 1748 346 L1752 388 L1781 396 L1781 437 L1673 437 L1678 395 L1692 388z" fill="#1e1e23"/>
</g>
</g>
</svg>
<div class="a" style="left:2px;top:556px;width:1916px;height:46px;background:#262626;"></div>
<svg class="i" style="left:23.6px;top:568.3px" width="19.5" height="19.5" viewBox="0 0 24 24" stroke="#e6e6e6" stroke-width="1.7"><path d="M5 5a2 2 0 0 1 3.008-1.728l11.997 6.998a2 2 0 0 1 .003 3.458l-12 7A2 2 0 0 1 5 19z"/></svg>
<svg class="i" style="left:70.3px;top:568px" width="19" height="19" viewBox="0 0 24 24" stroke="#e6e6e6" stroke-width="1.6"><path d="M11 4.702a.705.705 0 0 0-1.203-.498L6.413 7.587A1.4 1.4 0 0 1 5.416 8H3a1 1 0 0 0-1 1v6a1 1 0 0 0 1 1h2.416a1.4 1.4 0 0 1 .997.413l3.383 3.384A.705.705 0 0 0 11 19.298z"/><path d="M16 9a5 5 0 0 1 0 6"/><path d="M19.364 18.364a9 9 0 0 0 0-12.728"/></svg>
<div class="a" style="left:110px;top:575px;width:109px;height:6px;background:#334155;border-radius:3px"></div>
<div class="a" style="left:110px;top:575px;width:76px;height:6px;background:#ffffff;border-radius:3px"></div>
<div class="a" style="left:176px;top:570px;width:16px;height:16px;background:#0f172a;border:2px solid #ffffff;border-radius:50%"></div>
<div class="a nw mono" style="left:226px;top:573.4px;font-size:10px;line-height:10px;color:#94a3b8;">70%</div>
<div class="a" style="left:272px;top:568px;width:1px;height:21px;background:#4a4a4a;"></div>
<svg class="i" style="left:294.8px;top:567.8px" width="20" height="20" viewBox="0 0 24 24" stroke="#e6e6e6" stroke-width="1.8"><circle cx="11" cy="11" r="8"/><line x1="21" x2="16.65" y1="21" y2="16.65"/><line x1="8" x2="14" y1="11" y2="11"/></svg>
<svg class="i" style="left:371.8px;top:567.8px" width="20" height="20" viewBox="0 0 24 24" stroke="#e6e6e6" stroke-width="1.8"><circle cx="11" cy="11" r="8"/><line x1="21" x2="16.65" y1="21" y2="16.65"/><line x1="11" x2="11" y1="8" y2="14"/><line x1="8" x2="14" y1="11" y2="11"/></svg>
<div class="a nw" style="left:329px;top:566.1px;font-size:9.3px;line-height:9.3px;color:#8d96a3;">ZOOM</div>
<div class="a nw mono" style="left:334.5px;top:581.4px;font-size:10px;line-height:10px;color:#f0f0f0;font-weight:bold;">130</div>
<div class="a" style="left:410px;top:575px;width:1299px;height:7px;background:#334155;border-radius:4px"></div>
<div class="a" style="left:410px;top:575px;width:182px;height:7px;background:#fd4f9f;border-radius:4px"></div>
<div class="a" style="left:583px;top:570.5px;width:15.5px;height:15.5px;background:#0f172a;border:1.5px solid #fd4f9f;border-radius:50%"></div>
<div class="a nw mono" style="left:1765px;top:564.26px;font-size:11.5px;line-height:11.5px;color:#cbd5e1;">00:00:17.100 /</div>
<div class="a nw mono" style="left:1772px;top:582.26px;font-size:11.5px;line-height:11.5px;color:#cbd5e1;">00:02:06.730</div>
<div class="a" style="left:2px;top:600px;width:1916px;height:1px;background:#202329;"></div>
<div class="a" style="left:2px;top:601px;width:1916px;height:1px;background:#2c3646;"></div>
<div class="a" style="left:2px;top:602px;width:1916px;height:168px;background:#0b1120;"></div>
<div class="a" style="left:2px;top:602px;width:403px;height:90px;background:#5f5f73;overflow:hidden">
<div class="a nw" style="left:0px;top:4.93px;font-size:14.2px;line-height:14.2px;color:#9a9ba5;-webkit-text-stroke:0.3px #9a9ba5">Suo&#269;en sa provalijom,</div>
</div>
<div class="a" style="left:2px;top:692px;width:403px;height:74px;background:#47398a;overflow:hidden">
<div class="a nw" style="left:0px;top:4.93px;font-size:14.2px;line-height:14.2px;color:#f2f2f2;-webkit-text-stroke:0.35px #f2f2f2">Standing at the precipice,</div>
</div>
<div class="a" style="left:405px;top:602px;width:226px;height:90px;background:#5d6169;overflow:hidden">
</div>
<div class="a" style="left:405px;top:692px;width:226px;height:74px;background:#4f1d96;overflow:hidden">
</div>
<div class="a" style="left:631px;top:602px;width:267px;height:90px;background:#5f5f73;overflow:hidden">
<div class="a nw" style="left:0px;top:4.93px;font-size:14.2px;line-height:14.2px;color:#9a9ba5;-webkit-text-stroke:0.3px #9a9ba5">Svako normalan bi stao,</div>
</div>
<div class="a" style="left:631px;top:692px;width:267px;height:74px;background:#47398a;overflow:hidden">
<div class="a nw" style="left:0px;top:4.93px;font-size:14.2px;line-height:14.2px;color:#f2f2f2;-webkit-text-stroke:0.35px #f2f2f2">Anyone sane would have stopped now.</div>
</div>
<div class="a" style="left:898px;top:602px;width:323px;height:90px;background:#5d6169;overflow:hidden">
</div>
<div class="a" style="left:898px;top:692px;width:323px;height:74px;background:#4f1d96;overflow:hidden">
</div>
<div class="a" style="left:1221px;top:602px;width:370px;height:90px;background:#383b4f;overflow:hidden">
<div class="a nw" style="left:0px;top:4.93px;font-size:14.2px;line-height:14.2px;color:#9a9ba5;-webkit-text-stroke:0.3px #9a9ba5">Suo&#269;en sa provalijom,</div>
</div>
<div class="a" style="left:1221px;top:692px;width:370px;height:74px;background:#3558c5;overflow:hidden">
<div class="a nw" style="left:0px;top:4.93px;font-size:14.2px;line-height:14.2px;color:#f2f2f2;-webkit-text-stroke:0.35px #f2f2f2">Standing at the precipice,</div>
</div>
<div class="a" style="left:1591px;top:602px;width:264px;height:90px;background:#2d3238;overflow:hidden">
</div>
<div class="a" style="left:1591px;top:692px;width:264px;height:74px;background:#7b3be8;overflow:hidden">
</div>
<div class="a" style="left:1855px;top:602px;width:63px;height:90px;background:#383b4f;overflow:hidden">
<div class="a nw" style="left:0px;top:4.93px;font-size:14.2px;line-height:14.2px;color:#9a9ba5;-webkit-text-stroke:0.3px #9a9ba5">Ja stati nis</div>
</div>
<div class="a" style="left:1855px;top:692px;width:63px;height:74px;background:#5b4bb9;overflow:hidden">
<div class="a nw" style="left:0px;top:4.93px;font-size:14.2px;line-height:14.2px;color:#f2f2f2;-webkit-text-stroke:0.35px #f2f2f2">I just neve</div>
</div>
<div class="a" style="left:1136px;top:602px;width:1px;height:164px;background:#3a3a3a;"></div>
<div class="a" style="left:1326.0px;top:602px;width:1px;height:35px;background:#4a4c5e;"></div>
<div class="a" style="left:1326.0px;top:721px;width:1px;height:35px;background:#4a67c8;"></div>
<div class="a" style="left:1443.0px;top:602px;width:1px;height:17px;background:#4a4c5e;"></div>
<div class="a" style="left:1443.0px;top:738px;width:1px;height:18px;background:#4a67c8;"></div>
<div class="a" style="left:1560.0px;top:602px;width:1px;height:35px;background:#8a8a96;"></div>
<div class="a" style="left:1560.0px;top:721px;width:1px;height:35px;background:#1fae8e;"></div>
<div class="a" style="left:1677.0px;top:602px;width:1px;height:17px;background:#40454c;"></div>
<div class="a" style="left:1677.0px;top:738px;width:1px;height:18px;background:#6a4ad8;"></div>
<div class="a" style="left:1794.0px;top:602px;width:1px;height:35px;background:#40454c;"></div>
<div class="a" style="left:1794.0px;top:721px;width:1px;height:35px;background:#6a4ad8;"></div>
<div class="a" style="left:1911.0px;top:602px;width:1px;height:17px;background:#40454c;"></div>
<div class="a" style="left:1911.0px;top:738px;width:1px;height:18px;background:#6a60c0;"></div>
<div class="a nw" style="left:1330.5px;top:607.38px;font-size:12.5px;line-height:12.5px;color:#4a4b5b;">00:00:18.000</div>
<div class="a nw" style="left:1564.5px;top:607.38px;font-size:12.5px;line-height:12.5px;color:#8e8b98;">00:00:20.000</div>
<div class="a nw" style="left:1797.5px;top:607.38px;font-size:12.5px;line-height:12.5px;color:#464a52;clip-path:inset(0 0 0 0)">00:00:22.000</div>
<div class="a" style="left:1330.5px;top:730px;width:100px;height:30px;overflow:hidden">
<div class="a nw" style="left:0px;top:11.38px;font-size:12.5px;line-height:12.5px;color:#2b67b0;">00:00:18.000</div>
</div>
<div class="a" style="left:1564.5px;top:730px;width:26.5px;height:30px;overflow:hidden">
<div class="a nw" style="left:0px;top:11.38px;font-size:12.5px;line-height:12.5px;color:#1fae98;">00:00:20.000</div>
</div>
<div class="a" style="left:1591px;top:730px;width:60px;height:30px;overflow:hidden">
<div class="a nw" style="left:-26.5px;top:11.38px;font-size:12.5px;line-height:12.5px;color:#38e3a8;">00:00:20.000</div>
</div>
<div class="a" style="left:1797.5px;top:730px;width:57.5px;height:30px;overflow:hidden">
<div class="a nw" style="left:0px;top:11.38px;font-size:12.5px;line-height:12.5px;color:#5e58d0;">00:00:22.000</div>
</div>
<div class="a" style="left:1855px;top:602px;width:63px;height:90px;background:#383b4f;overflow:hidden">
<div class="a nw" style="left:0px;top:4.93px;font-size:14.2px;line-height:14.2px;color:#9a9ba5;-webkit-text-stroke:0.3px #9a9ba5">Ja stati nis</div>
</div>
<div class="a" style="left:1855px;top:692px;width:63px;height:74px;background:#5b4bb9;overflow:hidden">
<div class="a nw" style="left:0px;top:4.93px;font-size:14.2px;line-height:14.2px;color:#f2f2f2;-webkit-text-stroke:0.35px #f2f2f2">I just neve</div>
</div>
<div class="a" style="left:1911px;top:738px;width:1px;height:18px;background:#7a70d0;"></div>
<div class="a" style="left:2px;top:766px;width:1916px;height:3px;background:#2e3a4e;"></div>
<div class="a" style="left:405px;top:766px;width:226px;height:3px;background:#1a1a1e;"></div>
<div class="a" style="left:898px;top:766px;width:323px;height:3px;background:#1a1a1e;"></div>
<div class="a" style="left:1591px;top:766px;width:264px;height:3px;background:#1a1a1e;"></div>
<div class="a" style="left:1221px;top:766px;width:370px;height:3px;background:#0c5570;"></div>
<div class="a" style="left:405px;top:692px;width:1px;height:74px;background:#2a2340;"></div>
<div class="a" style="left:631px;top:692px;width:1px;height:74px;background:#2a2340;"></div>
<div class="a" style="left:898px;top:692px;width:1px;height:74px;background:#2a2340;"></div>
<div class="a" style="left:1591px;top:692px;width:1px;height:74px;background:#2a2340;"></div>
<div class="a" style="left:1855px;top:692px;width:1px;height:74px;background:#2a2340;"></div>
<div class="a" style="left:2px;top:769px;width:1916px;height:1px;background:#334155;"></div>
<div class="a" style="left:2px;top:770px;width:1916px;height:44px;background:#0b1120;"></div>
<div class="a" style="left:0px;top:814px;width:1919px;height:3px;background:#8c8c8c;"></div>
<svg class="a" style="left:382.2px;top:782px" width="22.4" height="22.4" viewBox="14 6 34 34">
 <path d="M35.6 35 A13.4 13.4 0 1 1 43.6 25.4" stroke="#9e3a6e" stroke-width="1.5" fill="none"/>
 <path d="M43.6 25.4 C41.5 20.8 35.5 21.2 34.2 26.6 C33.6 29.8 34.3 33 35.6 35" stroke="#8e3566" stroke-width="1.4" fill="none"/>
 <g fill="#d8478e">
  <path d="M29.6 12.6 l1.2 1.7 1.8-.5 -.5 1.8 -2.5.6 -2.5-.6 -.5-1.8 1.8.5z"/>
  <circle cx="29.6" cy="18.2" r="1.9"/><circle cx="33" cy="18.3" r="1.8"/><circle cx="26.2" cy="18.6" r="1.8"/>
  <circle cx="24.4" cy="21.7" r="2"/><circle cx="28.2" cy="22" r="2"/><circle cx="31.9" cy="21.8" r="1.9"/><circle cx="35.2" cy="20.7" r="1.8"/>
  <circle cx="24.4" cy="25.3" r="2"/><circle cx="28" cy="25.6" r="1.9"/><circle cx="31.5" cy="25.4" r="1.8"/>
  <circle cx="25.8" cy="28.7" r="1.8"/><circle cx="29.4" cy="29.3" r="1.9"/>
 </g>
 <path d="M36.2 32.5 l3.2-6.3 2.4 3.6 -2.3 3.3z" stroke="#8e3566" stroke-width="1.3" fill="none"/>
</svg>
<div class="a nw" style="left:411.5px;top:787.23px;font-size:11.5px;line-height:11.5px;color:#cbd5e1;">&#169; Copyright 2026 Sublandia. All rights reserved.</div>
<div class="a nw" style="left:854px;top:787.25px;font-size:10.3px;line-height:10.3px;color:#cbd5e1;font-weight:bold;">ISSUES</div>
<div class="a" style="left:898px;top:784px;width:50px;height:18px;background:#1f2937;border:1px solid #9c4758;border-radius:9px"></div>
<div class="a nw" style="left:898px;top:789.18px;font-size:9.2px;line-height:9.2px;color:#b8c3d3;font-weight:bold;width:50px;text-align:center;">Errors 0</div>
<div class="a" style="left:953px;top:784px;width:67px;height:18px;background:#1f2937;border:1px solid #9a8431;border-radius:9px"></div>
<div class="a nw" style="left:953px;top:788.75px;font-size:9.7px;line-height:9.7px;color:#b8c3d3;font-weight:bold;width:67px;text-align:center;">Warnings 0</div>
<div class="a nw" style="left:1025px;top:789.1px;font-size:9.3px;line-height:9.3px;color:#b8c3d3;">No issues</div>
<div class="a nw" style="left:1319px;top:786.8px;font-size:12px;line-height:12px;color:#cbd5e1;">About</div>
<div class="a nw" style="left:1365px;top:787.05px;font-size:11.7px;line-height:11.7px;color:#cbd5e1;">View Privacy Policy</div>
<div class="a nw" style="left:1479px;top:786.97px;font-size:11.8px;line-height:11.8px;color:#cbd5e1;">View Legal</div>
</body></html>
